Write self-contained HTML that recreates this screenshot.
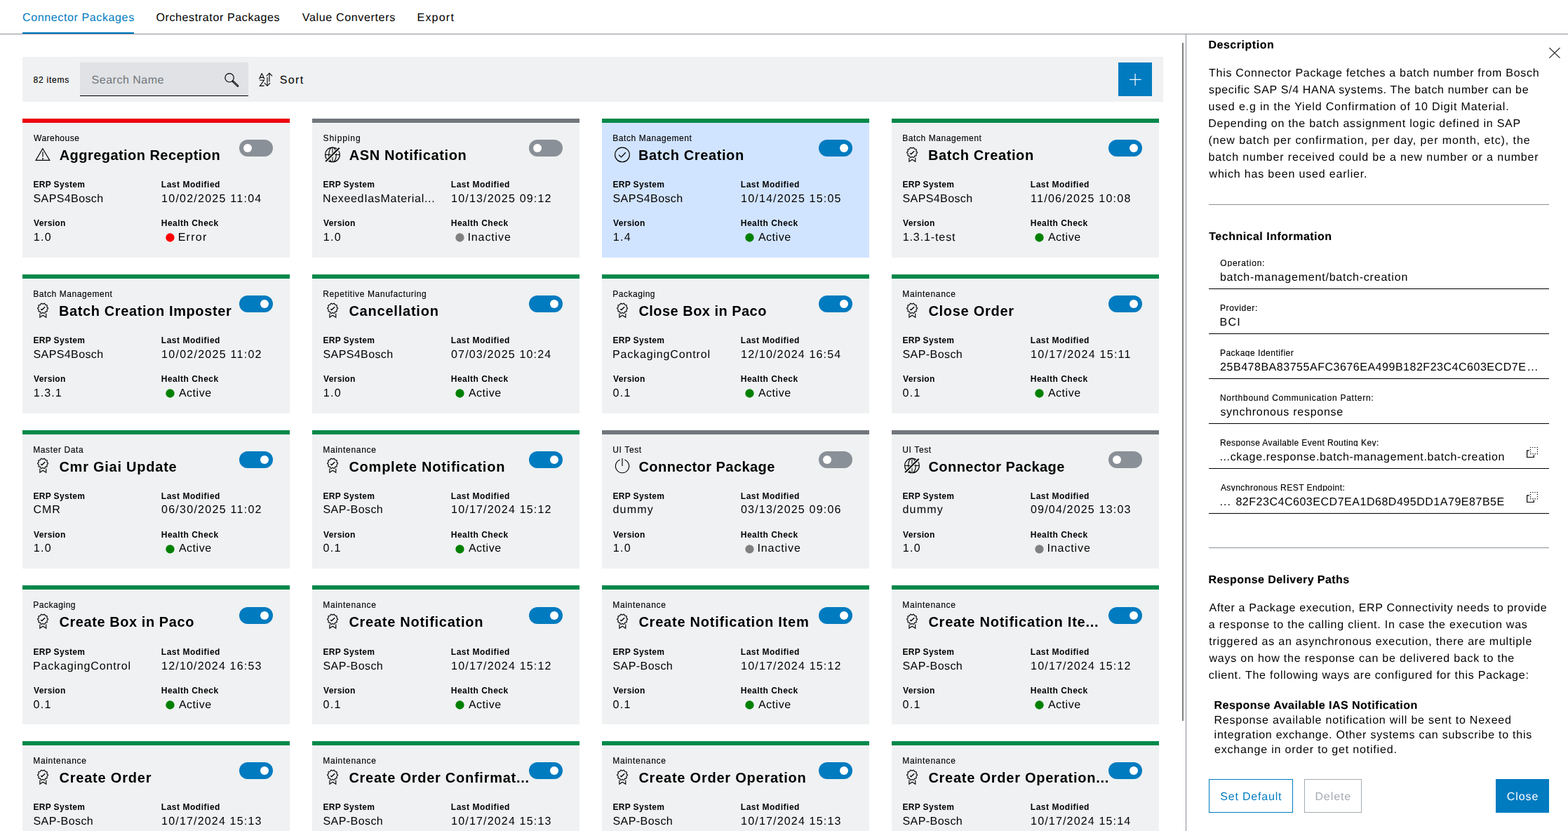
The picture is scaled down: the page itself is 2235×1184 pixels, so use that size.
<!DOCTYPE html>
<html lang="en"><head><meta charset="utf-8"><title>Connector Packages</title><style>
html,body{margin:0;padding:0;background:#fff;}
body{font-family:"Liberation Sans",sans-serif;color:#000;}
#root{position:relative;width:2235px;height:1184px;overflow:hidden;background:#fff;}
.t{position:absolute;white-space:pre;display:block;}
.g{text-rendering:geometricPrecision;}
.r{-webkit-text-stroke:0.15px currentColor;}
.h{-webkit-text-stroke:0.15px currentColor;}
.L{position:absolute;left:0;top:0;width:2235px;height:1184px;will-change:transform;}
.b{position:absolute;}
svg{position:absolute;overflow:visible;}
</style></head><body><div id="root">
<span class="t g" style="left:32.00px;top:18.00px;font-size:16px;line-height:16px;letter-spacing:0.624px;color:#007bc0;">Connector Packages</span>
<span class="t g" style="left:222.40px;top:18.00px;font-size:16px;line-height:16px;letter-spacing:0.630px;">Orchestrator Packages</span>
<span class="t g" style="left:430.80px;top:18.00px;font-size:16px;line-height:16px;letter-spacing:0.660px;">Value Converters</span>
<span class="t g" style="left:594.50px;top:18.00px;font-size:16px;line-height:16px;letter-spacing:1.220px;">Export</span>
<div class="b" style="left:32px;top:46px;width:159px;height:2px;background:#007bc0;"></div>
<div class="b" style="left:0px;top:48px;width:2235px;height:1px;background:#8a9097;"></div>
<div class="b" style="left:32px;top:81px;width:1626px;height:64px;background:#eff1f2;"></div>
<span class="t r" style="left:47.50px;top:108.00px;font-size:12px;line-height:12px;letter-spacing:0.786px;">82 items</span>
<div class="b" style="left:114px;top:89px;width:240px;height:47px;background:#e0e2e5;border-bottom:1px solid #000;"></div>
<span class="t g" style="left:130.60px;top:107.00px;font-size:16px;line-height:16px;letter-spacing:0.510px;color:#71767c;">Search Name</span>
<svg style="left:314px;top:98px" width="32" height="32" viewBox="0 0 32 32" fill="none" stroke="#000" stroke-width="1.2"><circle cx="13.05" cy="12.8" r="6.2"/><path d="M18.1 17.9 L24.9 24.5" stroke-width="2.8" stroke-linecap="round"/><path d="M18.6 18.4 L24.9 24.5" stroke="#e0e2e5" stroke-width="0.7" stroke-linecap="round"/></svg>
<svg style="left:363px;top:97px" width="32" height="32" viewBox="0 0 32 32" fill="none" stroke="#000" stroke-width="1.1"><path d="M6.5 15.7 L10.25 7.4 L13.9 15.7 M7.6 13.4 H12.9" stroke-linejoin="bevel"/><path d="M7.2 17.3 H13.4 L7.3 25.4 H13.6"/><path d="M20.95 19.5 V7.3 M16.8 11.4 L20.95 7.2 L25.1 11.4"/><path d="M18 13 V25 M13.7 21.1 L18 25.3 L22.2 21.1"/></svg>
<span class="t g" style="left:398.80px;top:107.00px;font-size:16px;line-height:16px;letter-spacing:1.333px;">Sort</span>
<div class="b" style="left:1594px;top:89px;width:48px;height:48px;background:#007bc0;"></div>
<svg style="left:1602px;top:97px" width="32" height="32" viewBox="0 0 32 32" fill="none" stroke="#fff" stroke-width="1.2"><path d="M16.1 7.9 V25 M8 16.45 H24.6"/></svg>
<div class="L">
<div class="b" style="left:32px;top:169px;width:381px;height:198px;background:#eff1f2;"></div>
<div class="b" style="left:32px;top:169px;width:381px;height:6px;background:#ed0007;"></div>
<span class="t r" style="left:48.10px;top:191.00px;font-size:12px;line-height:12px;letter-spacing:0.475px;">Warehouse</span>
<svg style="left:48px;top:205px" width="28" height="28" viewBox="0 0 28 28" fill="none" stroke="#000" stroke-width="1.15" stroke-linejoin="round"><path d="M12.9 6.7 L22.8 23.35 H3.0 Z" stroke-width="1.15" stroke-linejoin="miter"/><path d="M13 11.2 V18.5" stroke-width="1.5" stroke="#333"/><rect x="12.1" y="20.3" width="1.8" height="1.8" fill="#000" stroke="none"/></svg>
<span class="t " style="left:84.70px;top:211.00px;font-size:20px;line-height:20px;letter-spacing:0.450px;font-weight:700;">Aggregation Reception</span>
<div class="b" style="left:341px;top:199px;width:48px;height:24px;background:#8a9097;border-radius:12px;"></div>
<div class="b" style="left:347px;top:205px;width:12px;height:12px;background:#fff;border-radius:6px;"></div>
<span class="t " style="left:47.40px;top:257.00px;font-size:12px;line-height:12px;letter-spacing:0.344px;font-weight:700;">ERP System</span>
<span class="t " style="left:229.80px;top:257.00px;font-size:12px;line-height:12px;letter-spacing:0.525px;font-weight:700;">Last Modified</span>
<span class="t g" style="left:47.50px;top:276.00px;font-size:16px;line-height:16px;letter-spacing:0.400px;">SAPS4Bosch</span>
<span class="t g" style="left:230.10px;top:276.00px;font-size:16px;line-height:16px;letter-spacing:1.247px;">10/02/2025 11:04</span>
<span class="t " style="left:48.10px;top:312.00px;font-size:12px;line-height:12px;letter-spacing:0.300px;font-weight:700;">Version</span>
<span class="t " style="left:229.80px;top:312.00px;font-size:12px;line-height:12px;letter-spacing:0.482px;font-weight:700;">Health Check</span>
<span class="t g" style="left:47.70px;top:331.00px;font-size:16px;line-height:16px;letter-spacing:1.350px;">1.0</span>
<svg style="left:232px;top:329px" width="20" height="20" viewBox="0 0 20 20"><circle cx="10.45" cy="9.5" r="6.15" fill="#ff0000"/></svg>
<span class="t g" style="left:253.70px;top:331.00px;font-size:16px;line-height:16px;letter-spacing:1.250px;">Error</span>
<div class="b" style="left:445px;top:169px;width:381px;height:198px;background:#eff1f2;"></div>
<div class="b" style="left:445px;top:169px;width:381px;height:6px;background:#71767c;"></div>
<span class="t r" style="left:460.60px;top:191.00px;font-size:12px;line-height:12px;letter-spacing:0.900px;">Shipping</span>
<svg style="left:461px;top:205px" width="28" height="28" viewBox="0 0 28 28" fill="none" stroke="#000" stroke-width="1.15" stroke-linejoin="round"><circle cx="12.95" cy="15.42" r="10.35" stroke-width="1.15"/><ellipse cx="12.95" cy="15.42" rx="5.3" ry="10.35" stroke-width="1.1"/><path d="M2.6 15.4 H23.3" stroke-width="1.1"/><path d="M12.95 5 V25.8" stroke-width="1.3" stroke="#333"/><path d="M4.1 24.6 L21.7 7.3" stroke="#eff1f2" stroke-width="4.2"/><path d="M3.1 25.1 L22.7 5.8" stroke-width="2"/></svg>
<span class="t " style="left:497.70px;top:211.00px;font-size:20px;line-height:20px;letter-spacing:0.620px;font-weight:700;">ASN Notification</span>
<div class="b" style="left:754px;top:199px;width:48px;height:24px;background:#8a9097;border-radius:12px;"></div>
<div class="b" style="left:760px;top:205px;width:12px;height:12px;background:#fff;border-radius:6px;"></div>
<span class="t " style="left:460.40px;top:257.00px;font-size:12px;line-height:12px;letter-spacing:0.344px;font-weight:700;">ERP System</span>
<span class="t " style="left:642.80px;top:257.00px;font-size:12px;line-height:12px;letter-spacing:0.525px;font-weight:700;">Last Modified</span>
<span class="t g" style="left:459.90px;top:276.00px;font-size:16px;line-height:16px;letter-spacing:0.684px;">NexeedIasMaterial...</span>
<span class="t g" style="left:643.10px;top:276.00px;font-size:16px;line-height:16px;letter-spacing:1.187px;">10/13/2025 09:12</span>
<span class="t " style="left:461.10px;top:312.00px;font-size:12px;line-height:12px;letter-spacing:0.300px;font-weight:700;">Version</span>
<span class="t " style="left:642.80px;top:312.00px;font-size:12px;line-height:12px;letter-spacing:0.482px;font-weight:700;">Health Check</span>
<span class="t g" style="left:460.70px;top:331.00px;font-size:16px;line-height:16px;letter-spacing:1.350px;">1.0</span>
<svg style="left:645px;top:329px" width="20" height="20" viewBox="0 0 20 20"><circle cx="10.45" cy="9.5" r="6.15" fill="#808080"/></svg>
<span class="t g" style="left:666.50px;top:331.00px;font-size:16px;line-height:16px;letter-spacing:0.886px;">Inactive</span>
<div class="b" style="left:858px;top:169px;width:381px;height:198px;background:#d1e4ff;"></div>
<div class="b" style="left:858px;top:169px;width:381px;height:6px;background:#00884a;"></div>
<span class="t r" style="left:873.20px;top:191.00px;font-size:12px;line-height:12px;letter-spacing:0.580px;">Batch Management</span>
<svg style="left:874px;top:205px" width="28" height="28" viewBox="0 0 28 28" fill="none" stroke="#000" stroke-width="1.15" stroke-linejoin="round"><circle cx="12.95" cy="15.42" r="10.35" stroke-width="1.15"/><path d="M8.1 15.6 L11.5 18.9 L17.8 12.2" stroke-width="1.3" stroke-linejoin="miter"/></svg>
<span class="t " style="left:909.90px;top:211.00px;font-size:20px;line-height:20px;letter-spacing:0.615px;font-weight:700;">Batch Creation</span>
<div class="b" style="left:1167px;top:199px;width:48px;height:24px;background:#007bc0;border-radius:12px;"></div>
<div class="b" style="left:1197px;top:205px;width:12px;height:12px;background:#fff;border-radius:6px;"></div>
<span class="t " style="left:873.40px;top:257.00px;font-size:12px;line-height:12px;letter-spacing:0.344px;font-weight:700;">ERP System</span>
<span class="t " style="left:1055.80px;top:257.00px;font-size:12px;line-height:12px;letter-spacing:0.525px;font-weight:700;">Last Modified</span>
<span class="t g" style="left:873.50px;top:276.00px;font-size:16px;line-height:16px;letter-spacing:0.400px;">SAPS4Bosch</span>
<span class="t g" style="left:1056.10px;top:276.00px;font-size:16px;line-height:16px;letter-spacing:1.180px;">10/14/2025 15:05</span>
<span class="t " style="left:874.10px;top:312.00px;font-size:12px;line-height:12px;letter-spacing:0.300px;font-weight:700;">Version</span>
<span class="t " style="left:1055.80px;top:312.00px;font-size:12px;line-height:12px;letter-spacing:0.482px;font-weight:700;">Health Check</span>
<span class="t g" style="left:873.70px;top:331.00px;font-size:16px;line-height:16px;letter-spacing:1.300px;">1.4</span>
<svg style="left:1058px;top:329px" width="20" height="20" viewBox="0 0 20 20"><circle cx="10.45" cy="9.5" r="6.15" fill="#008000"/></svg>
<span class="t g" style="left:1080.90px;top:331.00px;font-size:16px;line-height:16px;letter-spacing:0.520px;">Active</span>
<div class="b" style="left:1271px;top:169px;width:381px;height:198px;background:#eff1f2;"></div>
<div class="b" style="left:1271px;top:169px;width:381px;height:6px;background:#00884a;"></div>
<span class="t r" style="left:1286.20px;top:191.00px;font-size:12px;line-height:12px;letter-spacing:0.580px;">Batch Management</span>
<svg style="left:1287px;top:205px" width="28" height="28" viewBox="0 0 28 28" fill="none" stroke="#000" stroke-width="1.15" stroke-linejoin="round"><path d="M13.07 6.17 L13.40 6.10 L13.74 5.90 L14.13 5.63 L14.54 5.39 L14.96 5.26 L15.35 5.29 L15.68 5.50 L15.94 5.85 L16.13 6.29 L16.29 6.72 L16.45 7.09 L16.67 7.34 L16.98 7.47 L17.38 7.51 L17.84 7.53 L18.32 7.58 L18.73 7.71 L19.03 7.97 L19.18 8.33 L19.18 8.77 L19.08 9.24 L18.95 9.68 L18.87 10.07 L18.90 10.41 L19.07 10.69 L19.37 10.96 L19.74 11.24 L20.09 11.56 L20.35 11.92 L20.44 12.30 L20.35 12.68 L20.09 13.04 L19.74 13.36 L19.37 13.64 L19.07 13.91 L18.90 14.19 L18.87 14.53 L18.95 14.92 L19.08 15.36 L19.18 15.83 L19.18 16.27 L19.03 16.63 L18.73 16.89 L18.32 17.02 L17.84 17.07 L17.38 17.09 L16.98 17.13 L16.67 17.26 L16.45 17.51 L16.29 17.88 L16.13 18.31 L15.94 18.75 L15.68 19.10 L15.35 19.31 L14.96 19.34 L14.54 19.21 L14.13 18.97 L13.74 18.70 L13.40 18.50 L13.07 18.43 L12.74 18.50 L12.40 18.70 L12.01 18.97 L11.60 19.21 L11.18 19.34 L10.79 19.31 L10.46 19.10 L10.20 18.75 L10.01 18.31 L9.85 17.88 L9.69 17.51 L9.47 17.26 L9.16 17.13 L8.76 17.09 L8.30 17.07 L7.82 17.02 L7.41 16.89 L7.11 16.63 L6.96 16.27 L6.96 15.83 L7.06 15.36 L7.19 14.92 L7.27 14.53 L7.24 14.19 L7.07 13.91 L6.77 13.64 L6.40 13.36 L6.05 13.04 L5.79 12.68 L5.70 12.30 L5.79 11.92 L6.05 11.56 L6.40 11.24 L6.77 10.96 L7.07 10.69 L7.24 10.41 L7.27 10.07 L7.19 9.68 L7.06 9.24 L6.96 8.77 L6.96 8.33 L7.11 7.97 L7.41 7.71 L7.82 7.58 L8.30 7.53 L8.76 7.51 L9.16 7.47 L9.47 7.34 L9.69 7.09 L9.85 6.72 L10.01 6.29 L10.20 5.85 L10.46 5.50 L10.79 5.29 L11.18 5.26 L11.60 5.39 L12.01 5.63 L12.40 5.90 L12.74 6.10Z" stroke-width="1.2"/><path d="M10.2 13.15 L11.7 14.5 L16.2 10.15" stroke-width="1.35" stroke-linejoin="miter"/><path d="M8.9 19.6 V25.2 L13.15 22.3 L17.75 25.2 V19.6" stroke-width="1.15" stroke-linejoin="miter"/></svg>
<span class="t " style="left:1322.90px;top:211.00px;font-size:20px;line-height:20px;letter-spacing:0.615px;font-weight:700;">Batch Creation</span>
<div class="b" style="left:1580px;top:199px;width:48px;height:24px;background:#007bc0;border-radius:12px;"></div>
<div class="b" style="left:1610px;top:205px;width:12px;height:12px;background:#fff;border-radius:6px;"></div>
<span class="t " style="left:1286.40px;top:257.00px;font-size:12px;line-height:12px;letter-spacing:0.344px;font-weight:700;">ERP System</span>
<span class="t " style="left:1468.80px;top:257.00px;font-size:12px;line-height:12px;letter-spacing:0.525px;font-weight:700;">Last Modified</span>
<span class="t g" style="left:1286.50px;top:276.00px;font-size:16px;line-height:16px;letter-spacing:0.400px;">SAPS4Bosch</span>
<span class="t g" style="left:1469.10px;top:276.00px;font-size:16px;line-height:16px;letter-spacing:1.260px;">11/06/2025 10:08</span>
<span class="t " style="left:1287.10px;top:312.00px;font-size:12px;line-height:12px;letter-spacing:0.300px;font-weight:700;">Version</span>
<span class="t " style="left:1468.80px;top:312.00px;font-size:12px;line-height:12px;letter-spacing:0.482px;font-weight:700;">Health Check</span>
<span class="t g" style="left:1286.70px;top:331.00px;font-size:16px;line-height:16px;letter-spacing:0.900px;">1.3.1-test</span>
<svg style="left:1471px;top:329px" width="20" height="20" viewBox="0 0 20 20"><circle cx="10.45" cy="9.5" r="6.15" fill="#008000"/></svg>
<span class="t g" style="left:1493.90px;top:331.00px;font-size:16px;line-height:16px;letter-spacing:0.520px;">Active</span>
<div class="b" style="left:32px;top:391px;width:381px;height:198px;background:#eff1f2;"></div>
<div class="b" style="left:32px;top:391px;width:381px;height:6px;background:#00884a;"></div>
<span class="t r" style="left:47.20px;top:413.00px;font-size:12px;line-height:12px;letter-spacing:0.580px;">Batch Management</span>
<svg style="left:48px;top:427px" width="28" height="28" viewBox="0 0 28 28" fill="none" stroke="#000" stroke-width="1.15" stroke-linejoin="round"><path d="M13.07 6.17 L13.40 6.10 L13.74 5.90 L14.13 5.63 L14.54 5.39 L14.96 5.26 L15.35 5.29 L15.68 5.50 L15.94 5.85 L16.13 6.29 L16.29 6.72 L16.45 7.09 L16.67 7.34 L16.98 7.47 L17.38 7.51 L17.84 7.53 L18.32 7.58 L18.73 7.71 L19.03 7.97 L19.18 8.33 L19.18 8.77 L19.08 9.24 L18.95 9.68 L18.87 10.07 L18.90 10.41 L19.07 10.69 L19.37 10.96 L19.74 11.24 L20.09 11.56 L20.35 11.92 L20.44 12.30 L20.35 12.68 L20.09 13.04 L19.74 13.36 L19.37 13.64 L19.07 13.91 L18.90 14.19 L18.87 14.53 L18.95 14.92 L19.08 15.36 L19.18 15.83 L19.18 16.27 L19.03 16.63 L18.73 16.89 L18.32 17.02 L17.84 17.07 L17.38 17.09 L16.98 17.13 L16.67 17.26 L16.45 17.51 L16.29 17.88 L16.13 18.31 L15.94 18.75 L15.68 19.10 L15.35 19.31 L14.96 19.34 L14.54 19.21 L14.13 18.97 L13.74 18.70 L13.40 18.50 L13.07 18.43 L12.74 18.50 L12.40 18.70 L12.01 18.97 L11.60 19.21 L11.18 19.34 L10.79 19.31 L10.46 19.10 L10.20 18.75 L10.01 18.31 L9.85 17.88 L9.69 17.51 L9.47 17.26 L9.16 17.13 L8.76 17.09 L8.30 17.07 L7.82 17.02 L7.41 16.89 L7.11 16.63 L6.96 16.27 L6.96 15.83 L7.06 15.36 L7.19 14.92 L7.27 14.53 L7.24 14.19 L7.07 13.91 L6.77 13.64 L6.40 13.36 L6.05 13.04 L5.79 12.68 L5.70 12.30 L5.79 11.92 L6.05 11.56 L6.40 11.24 L6.77 10.96 L7.07 10.69 L7.24 10.41 L7.27 10.07 L7.19 9.68 L7.06 9.24 L6.96 8.77 L6.96 8.33 L7.11 7.97 L7.41 7.71 L7.82 7.58 L8.30 7.53 L8.76 7.51 L9.16 7.47 L9.47 7.34 L9.69 7.09 L9.85 6.72 L10.01 6.29 L10.20 5.85 L10.46 5.50 L10.79 5.29 L11.18 5.26 L11.60 5.39 L12.01 5.63 L12.40 5.90 L12.74 6.10Z" stroke-width="1.2"/><path d="M10.2 13.15 L11.7 14.5 L16.2 10.15" stroke-width="1.35" stroke-linejoin="miter"/><path d="M8.9 19.6 V25.2 L13.15 22.3 L17.75 25.2 V19.6" stroke-width="1.15" stroke-linejoin="miter"/></svg>
<span class="t " style="left:83.90px;top:433.00px;font-size:20px;line-height:20px;letter-spacing:0.618px;font-weight:700;">Batch Creation Imposter</span>
<div class="b" style="left:341px;top:421px;width:48px;height:24px;background:#007bc0;border-radius:12px;"></div>
<div class="b" style="left:371px;top:427px;width:12px;height:12px;background:#fff;border-radius:6px;"></div>
<span class="t " style="left:47.40px;top:479.00px;font-size:12px;line-height:12px;letter-spacing:0.344px;font-weight:700;">ERP System</span>
<span class="t " style="left:229.80px;top:479.00px;font-size:12px;line-height:12px;letter-spacing:0.525px;font-weight:700;">Last Modified</span>
<span class="t g" style="left:47.50px;top:498.00px;font-size:16px;line-height:16px;letter-spacing:0.400px;">SAPS4Bosch</span>
<span class="t g" style="left:230.10px;top:498.00px;font-size:16px;line-height:16px;letter-spacing:1.267px;">10/02/2025 11:02</span>
<span class="t " style="left:48.10px;top:534.00px;font-size:12px;line-height:12px;letter-spacing:0.300px;font-weight:700;">Version</span>
<span class="t " style="left:229.80px;top:534.00px;font-size:12px;line-height:12px;letter-spacing:0.482px;font-weight:700;">Health Check</span>
<span class="t g" style="left:47.70px;top:553.00px;font-size:16px;line-height:16px;letter-spacing:1.100px;">1.3.1</span>
<svg style="left:232px;top:551px" width="20" height="20" viewBox="0 0 20 20"><circle cx="10.45" cy="9.5" r="6.15" fill="#008000"/></svg>
<span class="t g" style="left:254.90px;top:553.00px;font-size:16px;line-height:16px;letter-spacing:0.520px;">Active</span>
<div class="b" style="left:445px;top:391px;width:381px;height:198px;background:#eff1f2;"></div>
<div class="b" style="left:445px;top:391px;width:381px;height:6px;background:#00884a;"></div>
<span class="t r" style="left:460.20px;top:413.00px;font-size:12px;line-height:12px;letter-spacing:0.643px;">Repetitive Manufacturing</span>
<svg style="left:461px;top:427px" width="28" height="28" viewBox="0 0 28 28" fill="none" stroke="#000" stroke-width="1.15" stroke-linejoin="round"><path d="M13.07 6.17 L13.40 6.10 L13.74 5.90 L14.13 5.63 L14.54 5.39 L14.96 5.26 L15.35 5.29 L15.68 5.50 L15.94 5.85 L16.13 6.29 L16.29 6.72 L16.45 7.09 L16.67 7.34 L16.98 7.47 L17.38 7.51 L17.84 7.53 L18.32 7.58 L18.73 7.71 L19.03 7.97 L19.18 8.33 L19.18 8.77 L19.08 9.24 L18.95 9.68 L18.87 10.07 L18.90 10.41 L19.07 10.69 L19.37 10.96 L19.74 11.24 L20.09 11.56 L20.35 11.92 L20.44 12.30 L20.35 12.68 L20.09 13.04 L19.74 13.36 L19.37 13.64 L19.07 13.91 L18.90 14.19 L18.87 14.53 L18.95 14.92 L19.08 15.36 L19.18 15.83 L19.18 16.27 L19.03 16.63 L18.73 16.89 L18.32 17.02 L17.84 17.07 L17.38 17.09 L16.98 17.13 L16.67 17.26 L16.45 17.51 L16.29 17.88 L16.13 18.31 L15.94 18.75 L15.68 19.10 L15.35 19.31 L14.96 19.34 L14.54 19.21 L14.13 18.97 L13.74 18.70 L13.40 18.50 L13.07 18.43 L12.74 18.50 L12.40 18.70 L12.01 18.97 L11.60 19.21 L11.18 19.34 L10.79 19.31 L10.46 19.10 L10.20 18.75 L10.01 18.31 L9.85 17.88 L9.69 17.51 L9.47 17.26 L9.16 17.13 L8.76 17.09 L8.30 17.07 L7.82 17.02 L7.41 16.89 L7.11 16.63 L6.96 16.27 L6.96 15.83 L7.06 15.36 L7.19 14.92 L7.27 14.53 L7.24 14.19 L7.07 13.91 L6.77 13.64 L6.40 13.36 L6.05 13.04 L5.79 12.68 L5.70 12.30 L5.79 11.92 L6.05 11.56 L6.40 11.24 L6.77 10.96 L7.07 10.69 L7.24 10.41 L7.27 10.07 L7.19 9.68 L7.06 9.24 L6.96 8.77 L6.96 8.33 L7.11 7.97 L7.41 7.71 L7.82 7.58 L8.30 7.53 L8.76 7.51 L9.16 7.47 L9.47 7.34 L9.69 7.09 L9.85 6.72 L10.01 6.29 L10.20 5.85 L10.46 5.50 L10.79 5.29 L11.18 5.26 L11.60 5.39 L12.01 5.63 L12.40 5.90 L12.74 6.10Z" stroke-width="1.2"/><path d="M10.2 13.15 L11.7 14.5 L16.2 10.15" stroke-width="1.35" stroke-linejoin="miter"/><path d="M8.9 19.6 V25.2 L13.15 22.3 L17.75 25.2 V19.6" stroke-width="1.15" stroke-linejoin="miter"/></svg>
<span class="t " style="left:497.40px;top:433.00px;font-size:20px;line-height:20px;letter-spacing:0.782px;font-weight:700;">Cancellation</span>
<div class="b" style="left:754px;top:421px;width:48px;height:24px;background:#007bc0;border-radius:12px;"></div>
<div class="b" style="left:784px;top:427px;width:12px;height:12px;background:#fff;border-radius:6px;"></div>
<span class="t " style="left:460.40px;top:479.00px;font-size:12px;line-height:12px;letter-spacing:0.344px;font-weight:700;">ERP System</span>
<span class="t " style="left:642.80px;top:479.00px;font-size:12px;line-height:12px;letter-spacing:0.525px;font-weight:700;">Last Modified</span>
<span class="t g" style="left:460.50px;top:498.00px;font-size:16px;line-height:16px;letter-spacing:0.400px;">SAPS4Bosch</span>
<span class="t g" style="left:643.00px;top:498.00px;font-size:16px;line-height:16px;letter-spacing:1.173px;">07/03/2025 10:24</span>
<span class="t " style="left:461.10px;top:534.00px;font-size:12px;line-height:12px;letter-spacing:0.300px;font-weight:700;">Version</span>
<span class="t " style="left:642.80px;top:534.00px;font-size:12px;line-height:12px;letter-spacing:0.482px;font-weight:700;">Health Check</span>
<span class="t g" style="left:460.70px;top:553.00px;font-size:16px;line-height:16px;letter-spacing:1.350px;">1.0</span>
<svg style="left:645px;top:551px" width="20" height="20" viewBox="0 0 20 20"><circle cx="10.45" cy="9.5" r="6.15" fill="#008000"/></svg>
<span class="t g" style="left:667.90px;top:553.00px;font-size:16px;line-height:16px;letter-spacing:0.520px;">Active</span>
<div class="b" style="left:858px;top:391px;width:381px;height:198px;background:#eff1f2;"></div>
<div class="b" style="left:858px;top:391px;width:381px;height:6px;background:#00884a;"></div>
<span class="t r" style="left:873.20px;top:413.00px;font-size:12px;line-height:12px;letter-spacing:0.538px;">Packaging</span>
<svg style="left:874px;top:427px" width="28" height="28" viewBox="0 0 28 28" fill="none" stroke="#000" stroke-width="1.15" stroke-linejoin="round"><path d="M13.07 6.17 L13.40 6.10 L13.74 5.90 L14.13 5.63 L14.54 5.39 L14.96 5.26 L15.35 5.29 L15.68 5.50 L15.94 5.85 L16.13 6.29 L16.29 6.72 L16.45 7.09 L16.67 7.34 L16.98 7.47 L17.38 7.51 L17.84 7.53 L18.32 7.58 L18.73 7.71 L19.03 7.97 L19.18 8.33 L19.18 8.77 L19.08 9.24 L18.95 9.68 L18.87 10.07 L18.90 10.41 L19.07 10.69 L19.37 10.96 L19.74 11.24 L20.09 11.56 L20.35 11.92 L20.44 12.30 L20.35 12.68 L20.09 13.04 L19.74 13.36 L19.37 13.64 L19.07 13.91 L18.90 14.19 L18.87 14.53 L18.95 14.92 L19.08 15.36 L19.18 15.83 L19.18 16.27 L19.03 16.63 L18.73 16.89 L18.32 17.02 L17.84 17.07 L17.38 17.09 L16.98 17.13 L16.67 17.26 L16.45 17.51 L16.29 17.88 L16.13 18.31 L15.94 18.75 L15.68 19.10 L15.35 19.31 L14.96 19.34 L14.54 19.21 L14.13 18.97 L13.74 18.70 L13.40 18.50 L13.07 18.43 L12.74 18.50 L12.40 18.70 L12.01 18.97 L11.60 19.21 L11.18 19.34 L10.79 19.31 L10.46 19.10 L10.20 18.75 L10.01 18.31 L9.85 17.88 L9.69 17.51 L9.47 17.26 L9.16 17.13 L8.76 17.09 L8.30 17.07 L7.82 17.02 L7.41 16.89 L7.11 16.63 L6.96 16.27 L6.96 15.83 L7.06 15.36 L7.19 14.92 L7.27 14.53 L7.24 14.19 L7.07 13.91 L6.77 13.64 L6.40 13.36 L6.05 13.04 L5.79 12.68 L5.70 12.30 L5.79 11.92 L6.05 11.56 L6.40 11.24 L6.77 10.96 L7.07 10.69 L7.24 10.41 L7.27 10.07 L7.19 9.68 L7.06 9.24 L6.96 8.77 L6.96 8.33 L7.11 7.97 L7.41 7.71 L7.82 7.58 L8.30 7.53 L8.76 7.51 L9.16 7.47 L9.47 7.34 L9.69 7.09 L9.85 6.72 L10.01 6.29 L10.20 5.85 L10.46 5.50 L10.79 5.29 L11.18 5.26 L11.60 5.39 L12.01 5.63 L12.40 5.90 L12.74 6.10Z" stroke-width="1.2"/><path d="M10.2 13.15 L11.7 14.5 L16.2 10.15" stroke-width="1.35" stroke-linejoin="miter"/><path d="M8.9 19.6 V25.2 L13.15 22.3 L17.75 25.2 V19.6" stroke-width="1.15" stroke-linejoin="miter"/></svg>
<span class="t " style="left:910.40px;top:433.00px;font-size:20px;line-height:20px;letter-spacing:0.469px;font-weight:700;">Close Box in Paco</span>
<div class="b" style="left:1167px;top:421px;width:48px;height:24px;background:#007bc0;border-radius:12px;"></div>
<div class="b" style="left:1197px;top:427px;width:12px;height:12px;background:#fff;border-radius:6px;"></div>
<span class="t " style="left:873.40px;top:479.00px;font-size:12px;line-height:12px;letter-spacing:0.344px;font-weight:700;">ERP System</span>
<span class="t " style="left:1055.80px;top:479.00px;font-size:12px;line-height:12px;letter-spacing:0.525px;font-weight:700;">Last Modified</span>
<span class="t g" style="left:872.90px;top:498.00px;font-size:16px;line-height:16px;letter-spacing:0.860px;">PackagingControl</span>
<span class="t g" style="left:1056.10px;top:498.00px;font-size:16px;line-height:16px;letter-spacing:1.167px;">12/10/2024 16:54</span>
<span class="t " style="left:874.10px;top:534.00px;font-size:12px;line-height:12px;letter-spacing:0.300px;font-weight:700;">Version</span>
<span class="t " style="left:1055.80px;top:534.00px;font-size:12px;line-height:12px;letter-spacing:0.482px;font-weight:700;">Health Check</span>
<span class="t g" style="left:873.60px;top:553.00px;font-size:16px;line-height:16px;letter-spacing:1.250px;">0.1</span>
<svg style="left:1058px;top:551px" width="20" height="20" viewBox="0 0 20 20"><circle cx="10.45" cy="9.5" r="6.15" fill="#008000"/></svg>
<span class="t g" style="left:1080.90px;top:553.00px;font-size:16px;line-height:16px;letter-spacing:0.520px;">Active</span>
<div class="b" style="left:1271px;top:391px;width:381px;height:198px;background:#eff1f2;"></div>
<div class="b" style="left:1271px;top:391px;width:381px;height:6px;background:#00884a;"></div>
<span class="t r" style="left:1286.20px;top:413.00px;font-size:12px;line-height:12px;letter-spacing:0.700px;">Maintenance</span>
<svg style="left:1287px;top:427px" width="28" height="28" viewBox="0 0 28 28" fill="none" stroke="#000" stroke-width="1.15" stroke-linejoin="round"><path d="M13.07 6.17 L13.40 6.10 L13.74 5.90 L14.13 5.63 L14.54 5.39 L14.96 5.26 L15.35 5.29 L15.68 5.50 L15.94 5.85 L16.13 6.29 L16.29 6.72 L16.45 7.09 L16.67 7.34 L16.98 7.47 L17.38 7.51 L17.84 7.53 L18.32 7.58 L18.73 7.71 L19.03 7.97 L19.18 8.33 L19.18 8.77 L19.08 9.24 L18.95 9.68 L18.87 10.07 L18.90 10.41 L19.07 10.69 L19.37 10.96 L19.74 11.24 L20.09 11.56 L20.35 11.92 L20.44 12.30 L20.35 12.68 L20.09 13.04 L19.74 13.36 L19.37 13.64 L19.07 13.91 L18.90 14.19 L18.87 14.53 L18.95 14.92 L19.08 15.36 L19.18 15.83 L19.18 16.27 L19.03 16.63 L18.73 16.89 L18.32 17.02 L17.84 17.07 L17.38 17.09 L16.98 17.13 L16.67 17.26 L16.45 17.51 L16.29 17.88 L16.13 18.31 L15.94 18.75 L15.68 19.10 L15.35 19.31 L14.96 19.34 L14.54 19.21 L14.13 18.97 L13.74 18.70 L13.40 18.50 L13.07 18.43 L12.74 18.50 L12.40 18.70 L12.01 18.97 L11.60 19.21 L11.18 19.34 L10.79 19.31 L10.46 19.10 L10.20 18.75 L10.01 18.31 L9.85 17.88 L9.69 17.51 L9.47 17.26 L9.16 17.13 L8.76 17.09 L8.30 17.07 L7.82 17.02 L7.41 16.89 L7.11 16.63 L6.96 16.27 L6.96 15.83 L7.06 15.36 L7.19 14.92 L7.27 14.53 L7.24 14.19 L7.07 13.91 L6.77 13.64 L6.40 13.36 L6.05 13.04 L5.79 12.68 L5.70 12.30 L5.79 11.92 L6.05 11.56 L6.40 11.24 L6.77 10.96 L7.07 10.69 L7.24 10.41 L7.27 10.07 L7.19 9.68 L7.06 9.24 L6.96 8.77 L6.96 8.33 L7.11 7.97 L7.41 7.71 L7.82 7.58 L8.30 7.53 L8.76 7.51 L9.16 7.47 L9.47 7.34 L9.69 7.09 L9.85 6.72 L10.01 6.29 L10.20 5.85 L10.46 5.50 L10.79 5.29 L11.18 5.26 L11.60 5.39 L12.01 5.63 L12.40 5.90 L12.74 6.10Z" stroke-width="1.2"/><path d="M10.2 13.15 L11.7 14.5 L16.2 10.15" stroke-width="1.35" stroke-linejoin="miter"/><path d="M8.9 19.6 V25.2 L13.15 22.3 L17.75 25.2 V19.6" stroke-width="1.15" stroke-linejoin="miter"/></svg>
<span class="t " style="left:1323.40px;top:433.00px;font-size:20px;line-height:20px;letter-spacing:0.720px;font-weight:700;">Close Order</span>
<div class="b" style="left:1580px;top:421px;width:48px;height:24px;background:#007bc0;border-radius:12px;"></div>
<div class="b" style="left:1610px;top:427px;width:12px;height:12px;background:#fff;border-radius:6px;"></div>
<span class="t " style="left:1286.40px;top:479.00px;font-size:12px;line-height:12px;letter-spacing:0.344px;font-weight:700;">ERP System</span>
<span class="t " style="left:1468.80px;top:479.00px;font-size:12px;line-height:12px;letter-spacing:0.525px;font-weight:700;">Last Modified</span>
<span class="t g" style="left:1286.50px;top:498.00px;font-size:16px;line-height:16px;letter-spacing:0.425px;">SAP-Bosch</span>
<span class="t g" style="left:1469.10px;top:498.00px;font-size:16px;line-height:16px;letter-spacing:1.267px;">10/17/2024 15:11</span>
<span class="t " style="left:1287.10px;top:534.00px;font-size:12px;line-height:12px;letter-spacing:0.300px;font-weight:700;">Version</span>
<span class="t " style="left:1468.80px;top:534.00px;font-size:12px;line-height:12px;letter-spacing:0.482px;font-weight:700;">Health Check</span>
<span class="t g" style="left:1286.60px;top:553.00px;font-size:16px;line-height:16px;letter-spacing:1.250px;">0.1</span>
<svg style="left:1471px;top:551px" width="20" height="20" viewBox="0 0 20 20"><circle cx="10.45" cy="9.5" r="6.15" fill="#008000"/></svg>
<span class="t g" style="left:1493.90px;top:553.00px;font-size:16px;line-height:16px;letter-spacing:0.520px;">Active</span>
<div class="b" style="left:32px;top:613px;width:381px;height:197px;background:#eff1f2;"></div>
<div class="b" style="left:32px;top:613px;width:381px;height:6px;background:#00884a;"></div>
<span class="t r" style="left:47.20px;top:635.00px;font-size:12px;line-height:12px;letter-spacing:0.620px;">Master Data</span>
<svg style="left:48px;top:648px" width="28" height="28" viewBox="0 0 28 28" fill="none" stroke="#000" stroke-width="1.15" stroke-linejoin="round"><path d="M13.07 6.17 L13.40 6.10 L13.74 5.90 L14.13 5.63 L14.54 5.39 L14.96 5.26 L15.35 5.29 L15.68 5.50 L15.94 5.85 L16.13 6.29 L16.29 6.72 L16.45 7.09 L16.67 7.34 L16.98 7.47 L17.38 7.51 L17.84 7.53 L18.32 7.58 L18.73 7.71 L19.03 7.97 L19.18 8.33 L19.18 8.77 L19.08 9.24 L18.95 9.68 L18.87 10.07 L18.90 10.41 L19.07 10.69 L19.37 10.96 L19.74 11.24 L20.09 11.56 L20.35 11.92 L20.44 12.30 L20.35 12.68 L20.09 13.04 L19.74 13.36 L19.37 13.64 L19.07 13.91 L18.90 14.19 L18.87 14.53 L18.95 14.92 L19.08 15.36 L19.18 15.83 L19.18 16.27 L19.03 16.63 L18.73 16.89 L18.32 17.02 L17.84 17.07 L17.38 17.09 L16.98 17.13 L16.67 17.26 L16.45 17.51 L16.29 17.88 L16.13 18.31 L15.94 18.75 L15.68 19.10 L15.35 19.31 L14.96 19.34 L14.54 19.21 L14.13 18.97 L13.74 18.70 L13.40 18.50 L13.07 18.43 L12.74 18.50 L12.40 18.70 L12.01 18.97 L11.60 19.21 L11.18 19.34 L10.79 19.31 L10.46 19.10 L10.20 18.75 L10.01 18.31 L9.85 17.88 L9.69 17.51 L9.47 17.26 L9.16 17.13 L8.76 17.09 L8.30 17.07 L7.82 17.02 L7.41 16.89 L7.11 16.63 L6.96 16.27 L6.96 15.83 L7.06 15.36 L7.19 14.92 L7.27 14.53 L7.24 14.19 L7.07 13.91 L6.77 13.64 L6.40 13.36 L6.05 13.04 L5.79 12.68 L5.70 12.30 L5.79 11.92 L6.05 11.56 L6.40 11.24 L6.77 10.96 L7.07 10.69 L7.24 10.41 L7.27 10.07 L7.19 9.68 L7.06 9.24 L6.96 8.77 L6.96 8.33 L7.11 7.97 L7.41 7.71 L7.82 7.58 L8.30 7.53 L8.76 7.51 L9.16 7.47 L9.47 7.34 L9.69 7.09 L9.85 6.72 L10.01 6.29 L10.20 5.85 L10.46 5.50 L10.79 5.29 L11.18 5.26 L11.60 5.39 L12.01 5.63 L12.40 5.90 L12.74 6.10Z" stroke-width="1.2"/><path d="M10.2 13.15 L11.7 14.5 L16.2 10.15" stroke-width="1.35" stroke-linejoin="miter"/><path d="M8.9 19.6 V25.2 L13.15 22.3 L17.75 25.2 V19.6" stroke-width="1.15" stroke-linejoin="miter"/></svg>
<span class="t " style="left:84.40px;top:655.00px;font-size:20px;line-height:20px;letter-spacing:0.757px;font-weight:700;">Cmr Giai Update</span>
<div class="b" style="left:341px;top:643px;width:48px;height:24px;background:#007bc0;border-radius:12px;"></div>
<div class="b" style="left:371px;top:649px;width:12px;height:12px;background:#fff;border-radius:6px;"></div>
<span class="t " style="left:47.40px;top:701.00px;font-size:12px;line-height:12px;letter-spacing:0.344px;font-weight:700;">ERP System</span>
<span class="t " style="left:229.80px;top:701.00px;font-size:12px;line-height:12px;letter-spacing:0.525px;font-weight:700;">Last Modified</span>
<span class="t g" style="left:47.40px;top:719.00px;font-size:16px;line-height:16px;letter-spacing:1.050px;">CMR</span>
<span class="t g" style="left:230.00px;top:719.00px;font-size:16px;line-height:16px;letter-spacing:1.273px;">06/30/2025 11:02</span>
<span class="t " style="left:48.10px;top:756.00px;font-size:12px;line-height:12px;letter-spacing:0.300px;font-weight:700;">Version</span>
<span class="t " style="left:229.80px;top:756.00px;font-size:12px;line-height:12px;letter-spacing:0.482px;font-weight:700;">Health Check</span>
<span class="t g" style="left:47.70px;top:774.00px;font-size:16px;line-height:16px;letter-spacing:1.350px;">1.0</span>
<svg style="left:232px;top:773px" width="20" height="20" viewBox="0 0 20 20"><circle cx="10.45" cy="9.3" r="6.15" fill="#008000"/></svg>
<span class="t g" style="left:254.90px;top:774.00px;font-size:16px;line-height:16px;letter-spacing:0.520px;">Active</span>
<div class="b" style="left:445px;top:613px;width:381px;height:197px;background:#eff1f2;"></div>
<div class="b" style="left:445px;top:613px;width:381px;height:6px;background:#00884a;"></div>
<span class="t r" style="left:460.20px;top:635.00px;font-size:12px;line-height:12px;letter-spacing:0.700px;">Maintenance</span>
<svg style="left:461px;top:648px" width="28" height="28" viewBox="0 0 28 28" fill="none" stroke="#000" stroke-width="1.15" stroke-linejoin="round"><path d="M13.07 6.17 L13.40 6.10 L13.74 5.90 L14.13 5.63 L14.54 5.39 L14.96 5.26 L15.35 5.29 L15.68 5.50 L15.94 5.85 L16.13 6.29 L16.29 6.72 L16.45 7.09 L16.67 7.34 L16.98 7.47 L17.38 7.51 L17.84 7.53 L18.32 7.58 L18.73 7.71 L19.03 7.97 L19.18 8.33 L19.18 8.77 L19.08 9.24 L18.95 9.68 L18.87 10.07 L18.90 10.41 L19.07 10.69 L19.37 10.96 L19.74 11.24 L20.09 11.56 L20.35 11.92 L20.44 12.30 L20.35 12.68 L20.09 13.04 L19.74 13.36 L19.37 13.64 L19.07 13.91 L18.90 14.19 L18.87 14.53 L18.95 14.92 L19.08 15.36 L19.18 15.83 L19.18 16.27 L19.03 16.63 L18.73 16.89 L18.32 17.02 L17.84 17.07 L17.38 17.09 L16.98 17.13 L16.67 17.26 L16.45 17.51 L16.29 17.88 L16.13 18.31 L15.94 18.75 L15.68 19.10 L15.35 19.31 L14.96 19.34 L14.54 19.21 L14.13 18.97 L13.74 18.70 L13.40 18.50 L13.07 18.43 L12.74 18.50 L12.40 18.70 L12.01 18.97 L11.60 19.21 L11.18 19.34 L10.79 19.31 L10.46 19.10 L10.20 18.75 L10.01 18.31 L9.85 17.88 L9.69 17.51 L9.47 17.26 L9.16 17.13 L8.76 17.09 L8.30 17.07 L7.82 17.02 L7.41 16.89 L7.11 16.63 L6.96 16.27 L6.96 15.83 L7.06 15.36 L7.19 14.92 L7.27 14.53 L7.24 14.19 L7.07 13.91 L6.77 13.64 L6.40 13.36 L6.05 13.04 L5.79 12.68 L5.70 12.30 L5.79 11.92 L6.05 11.56 L6.40 11.24 L6.77 10.96 L7.07 10.69 L7.24 10.41 L7.27 10.07 L7.19 9.68 L7.06 9.24 L6.96 8.77 L6.96 8.33 L7.11 7.97 L7.41 7.71 L7.82 7.58 L8.30 7.53 L8.76 7.51 L9.16 7.47 L9.47 7.34 L9.69 7.09 L9.85 6.72 L10.01 6.29 L10.20 5.85 L10.46 5.50 L10.79 5.29 L11.18 5.26 L11.60 5.39 L12.01 5.63 L12.40 5.90 L12.74 6.10Z" stroke-width="1.2"/><path d="M10.2 13.15 L11.7 14.5 L16.2 10.15" stroke-width="1.35" stroke-linejoin="miter"/><path d="M8.9 19.6 V25.2 L13.15 22.3 L17.75 25.2 V19.6" stroke-width="1.15" stroke-linejoin="miter"/></svg>
<span class="t " style="left:497.40px;top:655.00px;font-size:20px;line-height:20px;letter-spacing:0.765px;font-weight:700;">Complete Notification</span>
<div class="b" style="left:754px;top:643px;width:48px;height:24px;background:#007bc0;border-radius:12px;"></div>
<div class="b" style="left:784px;top:649px;width:12px;height:12px;background:#fff;border-radius:6px;"></div>
<span class="t " style="left:460.40px;top:701.00px;font-size:12px;line-height:12px;letter-spacing:0.344px;font-weight:700;">ERP System</span>
<span class="t " style="left:642.80px;top:701.00px;font-size:12px;line-height:12px;letter-spacing:0.525px;font-weight:700;">Last Modified</span>
<span class="t g" style="left:460.50px;top:719.00px;font-size:16px;line-height:16px;letter-spacing:0.425px;">SAP-Bosch</span>
<span class="t g" style="left:643.10px;top:719.00px;font-size:16px;line-height:16px;letter-spacing:1.187px;">10/17/2024 15:12</span>
<span class="t " style="left:461.10px;top:756.00px;font-size:12px;line-height:12px;letter-spacing:0.300px;font-weight:700;">Version</span>
<span class="t " style="left:642.80px;top:756.00px;font-size:12px;line-height:12px;letter-spacing:0.482px;font-weight:700;">Health Check</span>
<span class="t g" style="left:460.60px;top:774.00px;font-size:16px;line-height:16px;letter-spacing:1.250px;">0.1</span>
<svg style="left:645px;top:773px" width="20" height="20" viewBox="0 0 20 20"><circle cx="10.45" cy="9.3" r="6.15" fill="#008000"/></svg>
<span class="t g" style="left:667.90px;top:774.00px;font-size:16px;line-height:16px;letter-spacing:0.520px;">Active</span>
<div class="b" style="left:858px;top:613px;width:381px;height:197px;background:#eff1f2;"></div>
<div class="b" style="left:858px;top:613px;width:381px;height:6px;background:#71767c;"></div>
<span class="t r" style="left:873.30px;top:635.00px;font-size:12px;line-height:12px;letter-spacing:0.617px;">UI Test</span>
<svg style="left:874px;top:648px" width="28" height="28" viewBox="0 0 28 28" fill="none" stroke="#000" stroke-width="1.15" stroke-linejoin="round"><path d="M16.67 7.28 A9.6 9.6 0 1 1 9.33 7.28" stroke-width="1.15" stroke-linecap="round"/><path d="M12.97 5.0 V15.9" stroke-width="1.6" stroke="#444"/></svg>
<span class="t " style="left:910.40px;top:655.00px;font-size:20px;line-height:20px;letter-spacing:0.456px;font-weight:700;">Connector Package</span>
<div class="b" style="left:1167px;top:643px;width:48px;height:24px;background:#8a9097;border-radius:12px;"></div>
<div class="b" style="left:1173px;top:649px;width:12px;height:12px;background:#fff;border-radius:6px;"></div>
<span class="t " style="left:873.40px;top:701.00px;font-size:12px;line-height:12px;letter-spacing:0.344px;font-weight:700;">ERP System</span>
<span class="t " style="left:1055.80px;top:701.00px;font-size:12px;line-height:12px;letter-spacing:0.525px;font-weight:700;">Last Modified</span>
<span class="t g" style="left:873.50px;top:719.00px;font-size:16px;line-height:16px;letter-spacing:1.175px;">dummy</span>
<span class="t g" style="left:1056.00px;top:719.00px;font-size:16px;line-height:16px;letter-spacing:1.187px;">03/13/2025 09:06</span>
<span class="t " style="left:874.10px;top:756.00px;font-size:12px;line-height:12px;letter-spacing:0.300px;font-weight:700;">Version</span>
<span class="t " style="left:1055.80px;top:756.00px;font-size:12px;line-height:12px;letter-spacing:0.482px;font-weight:700;">Health Check</span>
<span class="t g" style="left:873.70px;top:774.00px;font-size:16px;line-height:16px;letter-spacing:1.350px;">1.0</span>
<svg style="left:1058px;top:773px" width="20" height="20" viewBox="0 0 20 20"><circle cx="10.45" cy="9.3" r="6.15" fill="#808080"/></svg>
<span class="t g" style="left:1079.50px;top:774.00px;font-size:16px;line-height:16px;letter-spacing:0.886px;">Inactive</span>
<div class="b" style="left:1271px;top:613px;width:381px;height:197px;background:#eff1f2;"></div>
<div class="b" style="left:1271px;top:613px;width:381px;height:6px;background:#71767c;"></div>
<span class="t r" style="left:1286.30px;top:635.00px;font-size:12px;line-height:12px;letter-spacing:0.617px;">UI Test</span>
<svg style="left:1287px;top:648px" width="28" height="28" viewBox="0 0 28 28" fill="none" stroke="#000" stroke-width="1.15" stroke-linejoin="round"><circle cx="12.95" cy="15.42" r="10.35" stroke-width="1.15"/><ellipse cx="12.95" cy="15.42" rx="5.3" ry="10.35" stroke-width="1.1"/><path d="M2.6 15.4 H23.3" stroke-width="1.1"/><path d="M12.95 5 V25.8" stroke-width="1.3" stroke="#333"/><path d="M4.1 24.6 L21.7 7.3" stroke="#eff1f2" stroke-width="4.2"/><path d="M3.1 25.1 L22.7 5.8" stroke-width="2"/></svg>
<span class="t " style="left:1323.40px;top:655.00px;font-size:20px;line-height:20px;letter-spacing:0.456px;font-weight:700;">Connector Package</span>
<div class="b" style="left:1580px;top:643px;width:48px;height:24px;background:#8a9097;border-radius:12px;"></div>
<div class="b" style="left:1586px;top:649px;width:12px;height:12px;background:#fff;border-radius:6px;"></div>
<span class="t " style="left:1286.40px;top:701.00px;font-size:12px;line-height:12px;letter-spacing:0.344px;font-weight:700;">ERP System</span>
<span class="t " style="left:1468.80px;top:701.00px;font-size:12px;line-height:12px;letter-spacing:0.525px;font-weight:700;">Last Modified</span>
<span class="t g" style="left:1286.50px;top:719.00px;font-size:16px;line-height:16px;letter-spacing:1.175px;">dummy</span>
<span class="t g" style="left:1469.00px;top:719.00px;font-size:16px;line-height:16px;letter-spacing:1.187px;">09/04/2025 13:03</span>
<span class="t " style="left:1287.10px;top:756.00px;font-size:12px;line-height:12px;letter-spacing:0.300px;font-weight:700;">Version</span>
<span class="t " style="left:1468.80px;top:756.00px;font-size:12px;line-height:12px;letter-spacing:0.482px;font-weight:700;">Health Check</span>
<span class="t g" style="left:1286.70px;top:774.00px;font-size:16px;line-height:16px;letter-spacing:1.350px;">1.0</span>
<svg style="left:1471px;top:773px" width="20" height="20" viewBox="0 0 20 20"><circle cx="10.45" cy="9.3" r="6.15" fill="#808080"/></svg>
<span class="t g" style="left:1492.50px;top:774.00px;font-size:16px;line-height:16px;letter-spacing:0.886px;">Inactive</span>
<div class="b" style="left:32px;top:834px;width:381px;height:198px;background:#eff1f2;"></div>
<div class="b" style="left:32px;top:834px;width:381px;height:6px;background:#00884a;"></div>
<span class="t r" style="left:47.20px;top:856.00px;font-size:12px;line-height:12px;letter-spacing:0.538px;">Packaging</span>
<svg style="left:48px;top:870px" width="28" height="28" viewBox="0 0 28 28" fill="none" stroke="#000" stroke-width="1.15" stroke-linejoin="round"><path d="M13.07 6.17 L13.40 6.10 L13.74 5.90 L14.13 5.63 L14.54 5.39 L14.96 5.26 L15.35 5.29 L15.68 5.50 L15.94 5.85 L16.13 6.29 L16.29 6.72 L16.45 7.09 L16.67 7.34 L16.98 7.47 L17.38 7.51 L17.84 7.53 L18.32 7.58 L18.73 7.71 L19.03 7.97 L19.18 8.33 L19.18 8.77 L19.08 9.24 L18.95 9.68 L18.87 10.07 L18.90 10.41 L19.07 10.69 L19.37 10.96 L19.74 11.24 L20.09 11.56 L20.35 11.92 L20.44 12.30 L20.35 12.68 L20.09 13.04 L19.74 13.36 L19.37 13.64 L19.07 13.91 L18.90 14.19 L18.87 14.53 L18.95 14.92 L19.08 15.36 L19.18 15.83 L19.18 16.27 L19.03 16.63 L18.73 16.89 L18.32 17.02 L17.84 17.07 L17.38 17.09 L16.98 17.13 L16.67 17.26 L16.45 17.51 L16.29 17.88 L16.13 18.31 L15.94 18.75 L15.68 19.10 L15.35 19.31 L14.96 19.34 L14.54 19.21 L14.13 18.97 L13.74 18.70 L13.40 18.50 L13.07 18.43 L12.74 18.50 L12.40 18.70 L12.01 18.97 L11.60 19.21 L11.18 19.34 L10.79 19.31 L10.46 19.10 L10.20 18.75 L10.01 18.31 L9.85 17.88 L9.69 17.51 L9.47 17.26 L9.16 17.13 L8.76 17.09 L8.30 17.07 L7.82 17.02 L7.41 16.89 L7.11 16.63 L6.96 16.27 L6.96 15.83 L7.06 15.36 L7.19 14.92 L7.27 14.53 L7.24 14.19 L7.07 13.91 L6.77 13.64 L6.40 13.36 L6.05 13.04 L5.79 12.68 L5.70 12.30 L5.79 11.92 L6.05 11.56 L6.40 11.24 L6.77 10.96 L7.07 10.69 L7.24 10.41 L7.27 10.07 L7.19 9.68 L7.06 9.24 L6.96 8.77 L6.96 8.33 L7.11 7.97 L7.41 7.71 L7.82 7.58 L8.30 7.53 L8.76 7.51 L9.16 7.47 L9.47 7.34 L9.69 7.09 L9.85 6.72 L10.01 6.29 L10.20 5.85 L10.46 5.50 L10.79 5.29 L11.18 5.26 L11.60 5.39 L12.01 5.63 L12.40 5.90 L12.74 6.10Z" stroke-width="1.2"/><path d="M10.2 13.15 L11.7 14.5 L16.2 10.15" stroke-width="1.35" stroke-linejoin="miter"/><path d="M8.9 19.6 V25.2 L13.15 22.3 L17.75 25.2 V19.6" stroke-width="1.15" stroke-linejoin="miter"/></svg>
<span class="t " style="left:84.40px;top:876.00px;font-size:20px;line-height:20px;letter-spacing:0.571px;font-weight:700;">Create Box in Paco</span>
<div class="b" style="left:341px;top:865px;width:48px;height:24px;background:#007bc0;border-radius:12px;"></div>
<div class="b" style="left:371px;top:871px;width:12px;height:12px;background:#fff;border-radius:6px;"></div>
<span class="t " style="left:47.40px;top:923.00px;font-size:12px;line-height:12px;letter-spacing:0.344px;font-weight:700;">ERP System</span>
<span class="t " style="left:229.80px;top:923.00px;font-size:12px;line-height:12px;letter-spacing:0.525px;font-weight:700;">Last Modified</span>
<span class="t g" style="left:46.90px;top:942.00px;font-size:16px;line-height:16px;letter-spacing:0.860px;">PackagingControl</span>
<span class="t g" style="left:230.10px;top:942.00px;font-size:16px;line-height:16px;letter-spacing:1.180px;">12/10/2024 16:53</span>
<span class="t " style="left:48.10px;top:978.00px;font-size:12px;line-height:12px;letter-spacing:0.300px;font-weight:700;">Version</span>
<span class="t " style="left:229.80px;top:978.00px;font-size:12px;line-height:12px;letter-spacing:0.482px;font-weight:700;">Health Check</span>
<span class="t g" style="left:47.60px;top:997.00px;font-size:16px;line-height:16px;letter-spacing:1.250px;">0.1</span>
<svg style="left:232px;top:995px" width="20" height="20" viewBox="0 0 20 20"><circle cx="10.45" cy="9.5" r="6.15" fill="#008000"/></svg>
<span class="t g" style="left:254.90px;top:997.00px;font-size:16px;line-height:16px;letter-spacing:0.520px;">Active</span>
<div class="b" style="left:445px;top:834px;width:381px;height:198px;background:#eff1f2;"></div>
<div class="b" style="left:445px;top:834px;width:381px;height:6px;background:#00884a;"></div>
<span class="t r" style="left:460.20px;top:856.00px;font-size:12px;line-height:12px;letter-spacing:0.700px;">Maintenance</span>
<svg style="left:461px;top:870px" width="28" height="28" viewBox="0 0 28 28" fill="none" stroke="#000" stroke-width="1.15" stroke-linejoin="round"><path d="M13.07 6.17 L13.40 6.10 L13.74 5.90 L14.13 5.63 L14.54 5.39 L14.96 5.26 L15.35 5.29 L15.68 5.50 L15.94 5.85 L16.13 6.29 L16.29 6.72 L16.45 7.09 L16.67 7.34 L16.98 7.47 L17.38 7.51 L17.84 7.53 L18.32 7.58 L18.73 7.71 L19.03 7.97 L19.18 8.33 L19.18 8.77 L19.08 9.24 L18.95 9.68 L18.87 10.07 L18.90 10.41 L19.07 10.69 L19.37 10.96 L19.74 11.24 L20.09 11.56 L20.35 11.92 L20.44 12.30 L20.35 12.68 L20.09 13.04 L19.74 13.36 L19.37 13.64 L19.07 13.91 L18.90 14.19 L18.87 14.53 L18.95 14.92 L19.08 15.36 L19.18 15.83 L19.18 16.27 L19.03 16.63 L18.73 16.89 L18.32 17.02 L17.84 17.07 L17.38 17.09 L16.98 17.13 L16.67 17.26 L16.45 17.51 L16.29 17.88 L16.13 18.31 L15.94 18.75 L15.68 19.10 L15.35 19.31 L14.96 19.34 L14.54 19.21 L14.13 18.97 L13.74 18.70 L13.40 18.50 L13.07 18.43 L12.74 18.50 L12.40 18.70 L12.01 18.97 L11.60 19.21 L11.18 19.34 L10.79 19.31 L10.46 19.10 L10.20 18.75 L10.01 18.31 L9.85 17.88 L9.69 17.51 L9.47 17.26 L9.16 17.13 L8.76 17.09 L8.30 17.07 L7.82 17.02 L7.41 16.89 L7.11 16.63 L6.96 16.27 L6.96 15.83 L7.06 15.36 L7.19 14.92 L7.27 14.53 L7.24 14.19 L7.07 13.91 L6.77 13.64 L6.40 13.36 L6.05 13.04 L5.79 12.68 L5.70 12.30 L5.79 11.92 L6.05 11.56 L6.40 11.24 L6.77 10.96 L7.07 10.69 L7.24 10.41 L7.27 10.07 L7.19 9.68 L7.06 9.24 L6.96 8.77 L6.96 8.33 L7.11 7.97 L7.41 7.71 L7.82 7.58 L8.30 7.53 L8.76 7.51 L9.16 7.47 L9.47 7.34 L9.69 7.09 L9.85 6.72 L10.01 6.29 L10.20 5.85 L10.46 5.50 L10.79 5.29 L11.18 5.26 L11.60 5.39 L12.01 5.63 L12.40 5.90 L12.74 6.10Z" stroke-width="1.2"/><path d="M10.2 13.15 L11.7 14.5 L16.2 10.15" stroke-width="1.35" stroke-linejoin="miter"/><path d="M8.9 19.6 V25.2 L13.15 22.3 L17.75 25.2 V19.6" stroke-width="1.15" stroke-linejoin="miter"/></svg>
<span class="t " style="left:497.40px;top:876.00px;font-size:20px;line-height:20px;letter-spacing:0.733px;font-weight:700;">Create Notification</span>
<div class="b" style="left:754px;top:865px;width:48px;height:24px;background:#007bc0;border-radius:12px;"></div>
<div class="b" style="left:784px;top:871px;width:12px;height:12px;background:#fff;border-radius:6px;"></div>
<span class="t " style="left:460.40px;top:923.00px;font-size:12px;line-height:12px;letter-spacing:0.344px;font-weight:700;">ERP System</span>
<span class="t " style="left:642.80px;top:923.00px;font-size:12px;line-height:12px;letter-spacing:0.525px;font-weight:700;">Last Modified</span>
<span class="t g" style="left:460.50px;top:942.00px;font-size:16px;line-height:16px;letter-spacing:0.425px;">SAP-Bosch</span>
<span class="t g" style="left:643.10px;top:942.00px;font-size:16px;line-height:16px;letter-spacing:1.187px;">10/17/2024 15:12</span>
<span class="t " style="left:461.10px;top:978.00px;font-size:12px;line-height:12px;letter-spacing:0.300px;font-weight:700;">Version</span>
<span class="t " style="left:642.80px;top:978.00px;font-size:12px;line-height:12px;letter-spacing:0.482px;font-weight:700;">Health Check</span>
<span class="t g" style="left:460.60px;top:997.00px;font-size:16px;line-height:16px;letter-spacing:1.250px;">0.1</span>
<svg style="left:645px;top:995px" width="20" height="20" viewBox="0 0 20 20"><circle cx="10.45" cy="9.5" r="6.15" fill="#008000"/></svg>
<span class="t g" style="left:667.90px;top:997.00px;font-size:16px;line-height:16px;letter-spacing:0.520px;">Active</span>
<div class="b" style="left:858px;top:834px;width:381px;height:198px;background:#eff1f2;"></div>
<div class="b" style="left:858px;top:834px;width:381px;height:6px;background:#00884a;"></div>
<span class="t r" style="left:873.20px;top:856.00px;font-size:12px;line-height:12px;letter-spacing:0.700px;">Maintenance</span>
<svg style="left:874px;top:870px" width="28" height="28" viewBox="0 0 28 28" fill="none" stroke="#000" stroke-width="1.15" stroke-linejoin="round"><path d="M13.07 6.17 L13.40 6.10 L13.74 5.90 L14.13 5.63 L14.54 5.39 L14.96 5.26 L15.35 5.29 L15.68 5.50 L15.94 5.85 L16.13 6.29 L16.29 6.72 L16.45 7.09 L16.67 7.34 L16.98 7.47 L17.38 7.51 L17.84 7.53 L18.32 7.58 L18.73 7.71 L19.03 7.97 L19.18 8.33 L19.18 8.77 L19.08 9.24 L18.95 9.68 L18.87 10.07 L18.90 10.41 L19.07 10.69 L19.37 10.96 L19.74 11.24 L20.09 11.56 L20.35 11.92 L20.44 12.30 L20.35 12.68 L20.09 13.04 L19.74 13.36 L19.37 13.64 L19.07 13.91 L18.90 14.19 L18.87 14.53 L18.95 14.92 L19.08 15.36 L19.18 15.83 L19.18 16.27 L19.03 16.63 L18.73 16.89 L18.32 17.02 L17.84 17.07 L17.38 17.09 L16.98 17.13 L16.67 17.26 L16.45 17.51 L16.29 17.88 L16.13 18.31 L15.94 18.75 L15.68 19.10 L15.35 19.31 L14.96 19.34 L14.54 19.21 L14.13 18.97 L13.74 18.70 L13.40 18.50 L13.07 18.43 L12.74 18.50 L12.40 18.70 L12.01 18.97 L11.60 19.21 L11.18 19.34 L10.79 19.31 L10.46 19.10 L10.20 18.75 L10.01 18.31 L9.85 17.88 L9.69 17.51 L9.47 17.26 L9.16 17.13 L8.76 17.09 L8.30 17.07 L7.82 17.02 L7.41 16.89 L7.11 16.63 L6.96 16.27 L6.96 15.83 L7.06 15.36 L7.19 14.92 L7.27 14.53 L7.24 14.19 L7.07 13.91 L6.77 13.64 L6.40 13.36 L6.05 13.04 L5.79 12.68 L5.70 12.30 L5.79 11.92 L6.05 11.56 L6.40 11.24 L6.77 10.96 L7.07 10.69 L7.24 10.41 L7.27 10.07 L7.19 9.68 L7.06 9.24 L6.96 8.77 L6.96 8.33 L7.11 7.97 L7.41 7.71 L7.82 7.58 L8.30 7.53 L8.76 7.51 L9.16 7.47 L9.47 7.34 L9.69 7.09 L9.85 6.72 L10.01 6.29 L10.20 5.85 L10.46 5.50 L10.79 5.29 L11.18 5.26 L11.60 5.39 L12.01 5.63 L12.40 5.90 L12.74 6.10Z" stroke-width="1.2"/><path d="M10.2 13.15 L11.7 14.5 L16.2 10.15" stroke-width="1.35" stroke-linejoin="miter"/><path d="M8.9 19.6 V25.2 L13.15 22.3 L17.75 25.2 V19.6" stroke-width="1.15" stroke-linejoin="miter"/></svg>
<span class="t " style="left:910.40px;top:876.00px;font-size:20px;line-height:20px;letter-spacing:0.774px;font-weight:700;">Create Notification Item</span>
<div class="b" style="left:1167px;top:865px;width:48px;height:24px;background:#007bc0;border-radius:12px;"></div>
<div class="b" style="left:1197px;top:871px;width:12px;height:12px;background:#fff;border-radius:6px;"></div>
<span class="t " style="left:873.40px;top:923.00px;font-size:12px;line-height:12px;letter-spacing:0.344px;font-weight:700;">ERP System</span>
<span class="t " style="left:1055.80px;top:923.00px;font-size:12px;line-height:12px;letter-spacing:0.525px;font-weight:700;">Last Modified</span>
<span class="t g" style="left:873.50px;top:942.00px;font-size:16px;line-height:16px;letter-spacing:0.425px;">SAP-Bosch</span>
<span class="t g" style="left:1056.10px;top:942.00px;font-size:16px;line-height:16px;letter-spacing:1.187px;">10/17/2024 15:12</span>
<span class="t " style="left:874.10px;top:978.00px;font-size:12px;line-height:12px;letter-spacing:0.300px;font-weight:700;">Version</span>
<span class="t " style="left:1055.80px;top:978.00px;font-size:12px;line-height:12px;letter-spacing:0.482px;font-weight:700;">Health Check</span>
<span class="t g" style="left:873.60px;top:997.00px;font-size:16px;line-height:16px;letter-spacing:1.250px;">0.1</span>
<svg style="left:1058px;top:995px" width="20" height="20" viewBox="0 0 20 20"><circle cx="10.45" cy="9.5" r="6.15" fill="#008000"/></svg>
<span class="t g" style="left:1080.90px;top:997.00px;font-size:16px;line-height:16px;letter-spacing:0.520px;">Active</span>
<div class="b" style="left:1271px;top:834px;width:381px;height:198px;background:#eff1f2;"></div>
<div class="b" style="left:1271px;top:834px;width:381px;height:6px;background:#00884a;"></div>
<span class="t r" style="left:1286.20px;top:856.00px;font-size:12px;line-height:12px;letter-spacing:0.700px;">Maintenance</span>
<svg style="left:1287px;top:870px" width="28" height="28" viewBox="0 0 28 28" fill="none" stroke="#000" stroke-width="1.15" stroke-linejoin="round"><path d="M13.07 6.17 L13.40 6.10 L13.74 5.90 L14.13 5.63 L14.54 5.39 L14.96 5.26 L15.35 5.29 L15.68 5.50 L15.94 5.85 L16.13 6.29 L16.29 6.72 L16.45 7.09 L16.67 7.34 L16.98 7.47 L17.38 7.51 L17.84 7.53 L18.32 7.58 L18.73 7.71 L19.03 7.97 L19.18 8.33 L19.18 8.77 L19.08 9.24 L18.95 9.68 L18.87 10.07 L18.90 10.41 L19.07 10.69 L19.37 10.96 L19.74 11.24 L20.09 11.56 L20.35 11.92 L20.44 12.30 L20.35 12.68 L20.09 13.04 L19.74 13.36 L19.37 13.64 L19.07 13.91 L18.90 14.19 L18.87 14.53 L18.95 14.92 L19.08 15.36 L19.18 15.83 L19.18 16.27 L19.03 16.63 L18.73 16.89 L18.32 17.02 L17.84 17.07 L17.38 17.09 L16.98 17.13 L16.67 17.26 L16.45 17.51 L16.29 17.88 L16.13 18.31 L15.94 18.75 L15.68 19.10 L15.35 19.31 L14.96 19.34 L14.54 19.21 L14.13 18.97 L13.74 18.70 L13.40 18.50 L13.07 18.43 L12.74 18.50 L12.40 18.70 L12.01 18.97 L11.60 19.21 L11.18 19.34 L10.79 19.31 L10.46 19.10 L10.20 18.75 L10.01 18.31 L9.85 17.88 L9.69 17.51 L9.47 17.26 L9.16 17.13 L8.76 17.09 L8.30 17.07 L7.82 17.02 L7.41 16.89 L7.11 16.63 L6.96 16.27 L6.96 15.83 L7.06 15.36 L7.19 14.92 L7.27 14.53 L7.24 14.19 L7.07 13.91 L6.77 13.64 L6.40 13.36 L6.05 13.04 L5.79 12.68 L5.70 12.30 L5.79 11.92 L6.05 11.56 L6.40 11.24 L6.77 10.96 L7.07 10.69 L7.24 10.41 L7.27 10.07 L7.19 9.68 L7.06 9.24 L6.96 8.77 L6.96 8.33 L7.11 7.97 L7.41 7.71 L7.82 7.58 L8.30 7.53 L8.76 7.51 L9.16 7.47 L9.47 7.34 L9.69 7.09 L9.85 6.72 L10.01 6.29 L10.20 5.85 L10.46 5.50 L10.79 5.29 L11.18 5.26 L11.60 5.39 L12.01 5.63 L12.40 5.90 L12.74 6.10Z" stroke-width="1.2"/><path d="M10.2 13.15 L11.7 14.5 L16.2 10.15" stroke-width="1.35" stroke-linejoin="miter"/><path d="M8.9 19.6 V25.2 L13.15 22.3 L17.75 25.2 V19.6" stroke-width="1.15" stroke-linejoin="miter"/></svg>
<span class="t " style="left:1323.40px;top:876.00px;font-size:20px;line-height:20px;letter-spacing:0.756px;font-weight:700;">Create Notification Ite...</span>
<div class="b" style="left:1580px;top:865px;width:48px;height:24px;background:#007bc0;border-radius:12px;"></div>
<div class="b" style="left:1610px;top:871px;width:12px;height:12px;background:#fff;border-radius:6px;"></div>
<span class="t " style="left:1286.40px;top:923.00px;font-size:12px;line-height:12px;letter-spacing:0.344px;font-weight:700;">ERP System</span>
<span class="t " style="left:1468.80px;top:923.00px;font-size:12px;line-height:12px;letter-spacing:0.525px;font-weight:700;">Last Modified</span>
<span class="t g" style="left:1286.50px;top:942.00px;font-size:16px;line-height:16px;letter-spacing:0.425px;">SAP-Bosch</span>
<span class="t g" style="left:1469.10px;top:942.00px;font-size:16px;line-height:16px;letter-spacing:1.187px;">10/17/2024 15:12</span>
<span class="t " style="left:1287.10px;top:978.00px;font-size:12px;line-height:12px;letter-spacing:0.300px;font-weight:700;">Version</span>
<span class="t " style="left:1468.80px;top:978.00px;font-size:12px;line-height:12px;letter-spacing:0.482px;font-weight:700;">Health Check</span>
<span class="t g" style="left:1286.60px;top:997.00px;font-size:16px;line-height:16px;letter-spacing:1.250px;">0.1</span>
<svg style="left:1471px;top:995px" width="20" height="20" viewBox="0 0 20 20"><circle cx="10.45" cy="9.5" r="6.15" fill="#008000"/></svg>
<span class="t g" style="left:1493.90px;top:997.00px;font-size:16px;line-height:16px;letter-spacing:0.520px;">Active</span>
<div class="b" style="left:32px;top:1056px;width:381px;height:197px;background:#eff1f2;"></div>
<div class="b" style="left:32px;top:1056px;width:381px;height:6px;background:#00884a;"></div>
<span class="t r" style="left:47.20px;top:1078.00px;font-size:12px;line-height:12px;letter-spacing:0.700px;">Maintenance</span>
<svg style="left:48px;top:1092px" width="28" height="28" viewBox="0 0 28 28" fill="none" stroke="#000" stroke-width="1.15" stroke-linejoin="round"><path d="M13.07 6.17 L13.40 6.10 L13.74 5.90 L14.13 5.63 L14.54 5.39 L14.96 5.26 L15.35 5.29 L15.68 5.50 L15.94 5.85 L16.13 6.29 L16.29 6.72 L16.45 7.09 L16.67 7.34 L16.98 7.47 L17.38 7.51 L17.84 7.53 L18.32 7.58 L18.73 7.71 L19.03 7.97 L19.18 8.33 L19.18 8.77 L19.08 9.24 L18.95 9.68 L18.87 10.07 L18.90 10.41 L19.07 10.69 L19.37 10.96 L19.74 11.24 L20.09 11.56 L20.35 11.92 L20.44 12.30 L20.35 12.68 L20.09 13.04 L19.74 13.36 L19.37 13.64 L19.07 13.91 L18.90 14.19 L18.87 14.53 L18.95 14.92 L19.08 15.36 L19.18 15.83 L19.18 16.27 L19.03 16.63 L18.73 16.89 L18.32 17.02 L17.84 17.07 L17.38 17.09 L16.98 17.13 L16.67 17.26 L16.45 17.51 L16.29 17.88 L16.13 18.31 L15.94 18.75 L15.68 19.10 L15.35 19.31 L14.96 19.34 L14.54 19.21 L14.13 18.97 L13.74 18.70 L13.40 18.50 L13.07 18.43 L12.74 18.50 L12.40 18.70 L12.01 18.97 L11.60 19.21 L11.18 19.34 L10.79 19.31 L10.46 19.10 L10.20 18.75 L10.01 18.31 L9.85 17.88 L9.69 17.51 L9.47 17.26 L9.16 17.13 L8.76 17.09 L8.30 17.07 L7.82 17.02 L7.41 16.89 L7.11 16.63 L6.96 16.27 L6.96 15.83 L7.06 15.36 L7.19 14.92 L7.27 14.53 L7.24 14.19 L7.07 13.91 L6.77 13.64 L6.40 13.36 L6.05 13.04 L5.79 12.68 L5.70 12.30 L5.79 11.92 L6.05 11.56 L6.40 11.24 L6.77 10.96 L7.07 10.69 L7.24 10.41 L7.27 10.07 L7.19 9.68 L7.06 9.24 L6.96 8.77 L6.96 8.33 L7.11 7.97 L7.41 7.71 L7.82 7.58 L8.30 7.53 L8.76 7.51 L9.16 7.47 L9.47 7.34 L9.69 7.09 L9.85 6.72 L10.01 6.29 L10.20 5.85 L10.46 5.50 L10.79 5.29 L11.18 5.26 L11.60 5.39 L12.01 5.63 L12.40 5.90 L12.74 6.10Z" stroke-width="1.2"/><path d="M10.2 13.15 L11.7 14.5 L16.2 10.15" stroke-width="1.35" stroke-linejoin="miter"/><path d="M8.9 19.6 V25.2 L13.15 22.3 L17.75 25.2 V19.6" stroke-width="1.15" stroke-linejoin="miter"/></svg>
<span class="t " style="left:84.40px;top:1098.00px;font-size:20px;line-height:20px;letter-spacing:0.800px;font-weight:700;">Create Order</span>
<div class="b" style="left:341px;top:1086px;width:48px;height:24px;background:#007bc0;border-radius:12px;"></div>
<div class="b" style="left:371px;top:1092px;width:12px;height:12px;background:#fff;border-radius:6px;"></div>
<span class="t " style="left:47.40px;top:1144.00px;font-size:12px;line-height:12px;letter-spacing:0.344px;font-weight:700;">ERP System</span>
<span class="t " style="left:229.80px;top:1144.00px;font-size:12px;line-height:12px;letter-spacing:0.525px;font-weight:700;">Last Modified</span>
<span class="t g" style="left:47.50px;top:1163.00px;font-size:16px;line-height:16px;letter-spacing:0.425px;">SAP-Bosch</span>
<span class="t g" style="left:230.10px;top:1163.00px;font-size:16px;line-height:16px;letter-spacing:1.180px;">10/17/2024 15:13</span>
<span class="t " style="left:48.10px;top:1199.00px;font-size:12px;line-height:12px;letter-spacing:0.300px;font-weight:700;">Version</span>
<span class="t " style="left:229.80px;top:1199.00px;font-size:12px;line-height:12px;letter-spacing:0.482px;font-weight:700;">Health Check</span>
<span class="t g" style="left:47.60px;top:1218.00px;font-size:16px;line-height:16px;letter-spacing:1.250px;">0.1</span>
<svg style="left:232px;top:1216px" width="20" height="20" viewBox="0 0 20 20"><circle cx="10.45" cy="9.5" r="6.15" fill="#008000"/></svg>
<span class="t g" style="left:254.90px;top:1218.00px;font-size:16px;line-height:16px;letter-spacing:0.520px;">Active</span>
<div class="b" style="left:445px;top:1056px;width:381px;height:197px;background:#eff1f2;"></div>
<div class="b" style="left:445px;top:1056px;width:381px;height:6px;background:#00884a;"></div>
<span class="t r" style="left:460.20px;top:1078.00px;font-size:12px;line-height:12px;letter-spacing:0.700px;">Maintenance</span>
<svg style="left:461px;top:1092px" width="28" height="28" viewBox="0 0 28 28" fill="none" stroke="#000" stroke-width="1.15" stroke-linejoin="round"><path d="M13.07 6.17 L13.40 6.10 L13.74 5.90 L14.13 5.63 L14.54 5.39 L14.96 5.26 L15.35 5.29 L15.68 5.50 L15.94 5.85 L16.13 6.29 L16.29 6.72 L16.45 7.09 L16.67 7.34 L16.98 7.47 L17.38 7.51 L17.84 7.53 L18.32 7.58 L18.73 7.71 L19.03 7.97 L19.18 8.33 L19.18 8.77 L19.08 9.24 L18.95 9.68 L18.87 10.07 L18.90 10.41 L19.07 10.69 L19.37 10.96 L19.74 11.24 L20.09 11.56 L20.35 11.92 L20.44 12.30 L20.35 12.68 L20.09 13.04 L19.74 13.36 L19.37 13.64 L19.07 13.91 L18.90 14.19 L18.87 14.53 L18.95 14.92 L19.08 15.36 L19.18 15.83 L19.18 16.27 L19.03 16.63 L18.73 16.89 L18.32 17.02 L17.84 17.07 L17.38 17.09 L16.98 17.13 L16.67 17.26 L16.45 17.51 L16.29 17.88 L16.13 18.31 L15.94 18.75 L15.68 19.10 L15.35 19.31 L14.96 19.34 L14.54 19.21 L14.13 18.97 L13.74 18.70 L13.40 18.50 L13.07 18.43 L12.74 18.50 L12.40 18.70 L12.01 18.97 L11.60 19.21 L11.18 19.34 L10.79 19.31 L10.46 19.10 L10.20 18.75 L10.01 18.31 L9.85 17.88 L9.69 17.51 L9.47 17.26 L9.16 17.13 L8.76 17.09 L8.30 17.07 L7.82 17.02 L7.41 16.89 L7.11 16.63 L6.96 16.27 L6.96 15.83 L7.06 15.36 L7.19 14.92 L7.27 14.53 L7.24 14.19 L7.07 13.91 L6.77 13.64 L6.40 13.36 L6.05 13.04 L5.79 12.68 L5.70 12.30 L5.79 11.92 L6.05 11.56 L6.40 11.24 L6.77 10.96 L7.07 10.69 L7.24 10.41 L7.27 10.07 L7.19 9.68 L7.06 9.24 L6.96 8.77 L6.96 8.33 L7.11 7.97 L7.41 7.71 L7.82 7.58 L8.30 7.53 L8.76 7.51 L9.16 7.47 L9.47 7.34 L9.69 7.09 L9.85 6.72 L10.01 6.29 L10.20 5.85 L10.46 5.50 L10.79 5.29 L11.18 5.26 L11.60 5.39 L12.01 5.63 L12.40 5.90 L12.74 6.10Z" stroke-width="1.2"/><path d="M10.2 13.15 L11.7 14.5 L16.2 10.15" stroke-width="1.35" stroke-linejoin="miter"/><path d="M8.9 19.6 V25.2 L13.15 22.3 L17.75 25.2 V19.6" stroke-width="1.15" stroke-linejoin="miter"/></svg>
<span class="t " style="left:497.40px;top:1098.00px;font-size:20px;line-height:20px;letter-spacing:0.742px;font-weight:700;">Create Order Confirmat...</span>
<div class="b" style="left:754px;top:1086px;width:48px;height:24px;background:#007bc0;border-radius:12px;"></div>
<div class="b" style="left:784px;top:1092px;width:12px;height:12px;background:#fff;border-radius:6px;"></div>
<span class="t " style="left:460.40px;top:1144.00px;font-size:12px;line-height:12px;letter-spacing:0.344px;font-weight:700;">ERP System</span>
<span class="t " style="left:642.80px;top:1144.00px;font-size:12px;line-height:12px;letter-spacing:0.525px;font-weight:700;">Last Modified</span>
<span class="t g" style="left:460.50px;top:1163.00px;font-size:16px;line-height:16px;letter-spacing:0.425px;">SAP-Bosch</span>
<span class="t g" style="left:643.10px;top:1163.00px;font-size:16px;line-height:16px;letter-spacing:1.180px;">10/17/2024 15:13</span>
<span class="t " style="left:461.10px;top:1199.00px;font-size:12px;line-height:12px;letter-spacing:0.300px;font-weight:700;">Version</span>
<span class="t " style="left:642.80px;top:1199.00px;font-size:12px;line-height:12px;letter-spacing:0.482px;font-weight:700;">Health Check</span>
<span class="t g" style="left:460.60px;top:1218.00px;font-size:16px;line-height:16px;letter-spacing:1.250px;">0.1</span>
<svg style="left:645px;top:1216px" width="20" height="20" viewBox="0 0 20 20"><circle cx="10.45" cy="9.5" r="6.15" fill="#008000"/></svg>
<span class="t g" style="left:667.90px;top:1218.00px;font-size:16px;line-height:16px;letter-spacing:0.520px;">Active</span>
<div class="b" style="left:858px;top:1056px;width:381px;height:197px;background:#eff1f2;"></div>
<div class="b" style="left:858px;top:1056px;width:381px;height:6px;background:#00884a;"></div>
<span class="t r" style="left:873.20px;top:1078.00px;font-size:12px;line-height:12px;letter-spacing:0.700px;">Maintenance</span>
<svg style="left:874px;top:1092px" width="28" height="28" viewBox="0 0 28 28" fill="none" stroke="#000" stroke-width="1.15" stroke-linejoin="round"><path d="M13.07 6.17 L13.40 6.10 L13.74 5.90 L14.13 5.63 L14.54 5.39 L14.96 5.26 L15.35 5.29 L15.68 5.50 L15.94 5.85 L16.13 6.29 L16.29 6.72 L16.45 7.09 L16.67 7.34 L16.98 7.47 L17.38 7.51 L17.84 7.53 L18.32 7.58 L18.73 7.71 L19.03 7.97 L19.18 8.33 L19.18 8.77 L19.08 9.24 L18.95 9.68 L18.87 10.07 L18.90 10.41 L19.07 10.69 L19.37 10.96 L19.74 11.24 L20.09 11.56 L20.35 11.92 L20.44 12.30 L20.35 12.68 L20.09 13.04 L19.74 13.36 L19.37 13.64 L19.07 13.91 L18.90 14.19 L18.87 14.53 L18.95 14.92 L19.08 15.36 L19.18 15.83 L19.18 16.27 L19.03 16.63 L18.73 16.89 L18.32 17.02 L17.84 17.07 L17.38 17.09 L16.98 17.13 L16.67 17.26 L16.45 17.51 L16.29 17.88 L16.13 18.31 L15.94 18.75 L15.68 19.10 L15.35 19.31 L14.96 19.34 L14.54 19.21 L14.13 18.97 L13.74 18.70 L13.40 18.50 L13.07 18.43 L12.74 18.50 L12.40 18.70 L12.01 18.97 L11.60 19.21 L11.18 19.34 L10.79 19.31 L10.46 19.10 L10.20 18.75 L10.01 18.31 L9.85 17.88 L9.69 17.51 L9.47 17.26 L9.16 17.13 L8.76 17.09 L8.30 17.07 L7.82 17.02 L7.41 16.89 L7.11 16.63 L6.96 16.27 L6.96 15.83 L7.06 15.36 L7.19 14.92 L7.27 14.53 L7.24 14.19 L7.07 13.91 L6.77 13.64 L6.40 13.36 L6.05 13.04 L5.79 12.68 L5.70 12.30 L5.79 11.92 L6.05 11.56 L6.40 11.24 L6.77 10.96 L7.07 10.69 L7.24 10.41 L7.27 10.07 L7.19 9.68 L7.06 9.24 L6.96 8.77 L6.96 8.33 L7.11 7.97 L7.41 7.71 L7.82 7.58 L8.30 7.53 L8.76 7.51 L9.16 7.47 L9.47 7.34 L9.69 7.09 L9.85 6.72 L10.01 6.29 L10.20 5.85 L10.46 5.50 L10.79 5.29 L11.18 5.26 L11.60 5.39 L12.01 5.63 L12.40 5.90 L12.74 6.10Z" stroke-width="1.2"/><path d="M10.2 13.15 L11.7 14.5 L16.2 10.15" stroke-width="1.35" stroke-linejoin="miter"/><path d="M8.9 19.6 V25.2 L13.15 22.3 L17.75 25.2 V19.6" stroke-width="1.15" stroke-linejoin="miter"/></svg>
<span class="t " style="left:910.40px;top:1098.00px;font-size:20px;line-height:20px;letter-spacing:0.767px;font-weight:700;">Create Order Operation</span>
<div class="b" style="left:1167px;top:1086px;width:48px;height:24px;background:#007bc0;border-radius:12px;"></div>
<div class="b" style="left:1197px;top:1092px;width:12px;height:12px;background:#fff;border-radius:6px;"></div>
<span class="t " style="left:873.40px;top:1144.00px;font-size:12px;line-height:12px;letter-spacing:0.344px;font-weight:700;">ERP System</span>
<span class="t " style="left:1055.80px;top:1144.00px;font-size:12px;line-height:12px;letter-spacing:0.525px;font-weight:700;">Last Modified</span>
<span class="t g" style="left:873.50px;top:1163.00px;font-size:16px;line-height:16px;letter-spacing:0.425px;">SAP-Bosch</span>
<span class="t g" style="left:1056.10px;top:1163.00px;font-size:16px;line-height:16px;letter-spacing:1.180px;">10/17/2024 15:13</span>
<span class="t " style="left:874.10px;top:1199.00px;font-size:12px;line-height:12px;letter-spacing:0.300px;font-weight:700;">Version</span>
<span class="t " style="left:1055.80px;top:1199.00px;font-size:12px;line-height:12px;letter-spacing:0.482px;font-weight:700;">Health Check</span>
<span class="t g" style="left:873.60px;top:1218.00px;font-size:16px;line-height:16px;letter-spacing:1.250px;">0.1</span>
<svg style="left:1058px;top:1216px" width="20" height="20" viewBox="0 0 20 20"><circle cx="10.45" cy="9.5" r="6.15" fill="#008000"/></svg>
<span class="t g" style="left:1080.90px;top:1218.00px;font-size:16px;line-height:16px;letter-spacing:0.520px;">Active</span>
<div class="b" style="left:1271px;top:1056px;width:381px;height:197px;background:#eff1f2;"></div>
<div class="b" style="left:1271px;top:1056px;width:381px;height:6px;background:#00884a;"></div>
<span class="t r" style="left:1286.20px;top:1078.00px;font-size:12px;line-height:12px;letter-spacing:0.700px;">Maintenance</span>
<svg style="left:1287px;top:1092px" width="28" height="28" viewBox="0 0 28 28" fill="none" stroke="#000" stroke-width="1.15" stroke-linejoin="round"><path d="M13.07 6.17 L13.40 6.10 L13.74 5.90 L14.13 5.63 L14.54 5.39 L14.96 5.26 L15.35 5.29 L15.68 5.50 L15.94 5.85 L16.13 6.29 L16.29 6.72 L16.45 7.09 L16.67 7.34 L16.98 7.47 L17.38 7.51 L17.84 7.53 L18.32 7.58 L18.73 7.71 L19.03 7.97 L19.18 8.33 L19.18 8.77 L19.08 9.24 L18.95 9.68 L18.87 10.07 L18.90 10.41 L19.07 10.69 L19.37 10.96 L19.74 11.24 L20.09 11.56 L20.35 11.92 L20.44 12.30 L20.35 12.68 L20.09 13.04 L19.74 13.36 L19.37 13.64 L19.07 13.91 L18.90 14.19 L18.87 14.53 L18.95 14.92 L19.08 15.36 L19.18 15.83 L19.18 16.27 L19.03 16.63 L18.73 16.89 L18.32 17.02 L17.84 17.07 L17.38 17.09 L16.98 17.13 L16.67 17.26 L16.45 17.51 L16.29 17.88 L16.13 18.31 L15.94 18.75 L15.68 19.10 L15.35 19.31 L14.96 19.34 L14.54 19.21 L14.13 18.97 L13.74 18.70 L13.40 18.50 L13.07 18.43 L12.74 18.50 L12.40 18.70 L12.01 18.97 L11.60 19.21 L11.18 19.34 L10.79 19.31 L10.46 19.10 L10.20 18.75 L10.01 18.31 L9.85 17.88 L9.69 17.51 L9.47 17.26 L9.16 17.13 L8.76 17.09 L8.30 17.07 L7.82 17.02 L7.41 16.89 L7.11 16.63 L6.96 16.27 L6.96 15.83 L7.06 15.36 L7.19 14.92 L7.27 14.53 L7.24 14.19 L7.07 13.91 L6.77 13.64 L6.40 13.36 L6.05 13.04 L5.79 12.68 L5.70 12.30 L5.79 11.92 L6.05 11.56 L6.40 11.24 L6.77 10.96 L7.07 10.69 L7.24 10.41 L7.27 10.07 L7.19 9.68 L7.06 9.24 L6.96 8.77 L6.96 8.33 L7.11 7.97 L7.41 7.71 L7.82 7.58 L8.30 7.53 L8.76 7.51 L9.16 7.47 L9.47 7.34 L9.69 7.09 L9.85 6.72 L10.01 6.29 L10.20 5.85 L10.46 5.50 L10.79 5.29 L11.18 5.26 L11.60 5.39 L12.01 5.63 L12.40 5.90 L12.74 6.10Z" stroke-width="1.2"/><path d="M10.2 13.15 L11.7 14.5 L16.2 10.15" stroke-width="1.35" stroke-linejoin="miter"/><path d="M8.9 19.6 V25.2 L13.15 22.3 L17.75 25.2 V19.6" stroke-width="1.15" stroke-linejoin="miter"/></svg>
<span class="t " style="left:1323.40px;top:1098.00px;font-size:20px;line-height:20px;letter-spacing:0.750px;font-weight:700;">Create Order Operation...</span>
<div class="b" style="left:1580px;top:1086px;width:48px;height:24px;background:#007bc0;border-radius:12px;"></div>
<div class="b" style="left:1610px;top:1092px;width:12px;height:12px;background:#fff;border-radius:6px;"></div>
<span class="t " style="left:1286.40px;top:1144.00px;font-size:12px;line-height:12px;letter-spacing:0.344px;font-weight:700;">ERP System</span>
<span class="t " style="left:1468.80px;top:1144.00px;font-size:12px;line-height:12px;letter-spacing:0.525px;font-weight:700;">Last Modified</span>
<span class="t g" style="left:1286.50px;top:1163.00px;font-size:16px;line-height:16px;letter-spacing:0.425px;">SAP-Bosch</span>
<span class="t g" style="left:1469.10px;top:1163.00px;font-size:16px;line-height:16px;letter-spacing:1.167px;">10/17/2024 15:14</span>
<span class="t " style="left:1287.10px;top:1199.00px;font-size:12px;line-height:12px;letter-spacing:0.300px;font-weight:700;">Version</span>
<span class="t " style="left:1468.80px;top:1199.00px;font-size:12px;line-height:12px;letter-spacing:0.482px;font-weight:700;">Health Check</span>
<span class="t g" style="left:1286.60px;top:1218.00px;font-size:16px;line-height:16px;letter-spacing:1.250px;">0.1</span>
<svg style="left:1471px;top:1216px" width="20" height="20" viewBox="0 0 20 20"><circle cx="10.45" cy="9.5" r="6.15" fill="#008000"/></svg>
<span class="t g" style="left:1493.90px;top:1218.00px;font-size:16px;line-height:16px;letter-spacing:0.520px;">Active</span>
<div class="b" style="left:1685px;top:61px;width:2px;height:966px;background:#808080;"></div>
<div class="b" style="left:1690px;top:49px;width:1px;height:1135px;background:#8a9097;"></div>
<span class="t g h" style="left:1722.40px;top:57.00px;font-size:16px;line-height:16px;letter-spacing:0.530px;font-weight:700;">Description</span>
<svg style="left:2200px;top:60px" width="32" height="32" viewBox="0 0 32 32" fill="none" stroke="#1a1a1a" stroke-width="1.15"><path d="M8.4 8.1 L23.5 22.7 M23.5 8.1 L8.4 22.7"/></svg>
<span class="t g" style="left:1723.10px;top:97.00px;font-size:16px;line-height:16px;letter-spacing:0.695px;">This Connector Package fetches a batch number from Bosch</span>
<span class="t g" style="left:1723.00px;top:121.00px;font-size:16px;line-height:16px;letter-spacing:0.670px;">specific SAP S/4 HANA systems. The batch number can be</span>
<span class="t g" style="left:1722.50px;top:145.00px;font-size:16px;line-height:16px;letter-spacing:0.847px;">used e.g in the Yield Confirmation of 10 Digit Material.</span>
<span class="t g" style="left:1722.20px;top:169.00px;font-size:16px;line-height:16px;letter-spacing:0.777px;">Depending on the batch assignment logic defined in SAP</span>
<span class="t g" style="left:1722.50px;top:193.00px;font-size:16px;line-height:16px;letter-spacing:0.912px;">(new batch per confirmation, per day, per month, etc), the</span>
<span class="t g" style="left:1722.50px;top:217.00px;font-size:16px;line-height:16px;letter-spacing:0.850px;">batch number received could be a new number or a number</span>
<span class="t g" style="left:1723.50px;top:241.00px;font-size:16px;line-height:16px;letter-spacing:0.822px;">which has been used earlier.</span>
<div class="b" style="left:1723px;top:291px;width:485px;height:1px;background:#8a9097;"></div>
<span class="t g h" style="left:1723.30px;top:330.00px;font-size:16px;line-height:16px;letter-spacing:0.485px;font-weight:700;">Technical Information</span>
<span class="t r" style="left:1739.30px;top:369.00px;font-size:12px;line-height:12px;letter-spacing:0.789px;height:11px;overflow:hidden;">Operation:</span>
<span class="t g" style="left:1738.90px;top:388.00px;font-size:16px;line-height:16px;letter-spacing:0.790px;">batch-management/batch-creation</span>
<div class="b" style="left:1723px;top:411px;width:485px;height:1px;background:#000;"></div>
<span class="t r" style="left:1738.90px;top:433.00px;font-size:12px;line-height:12px;letter-spacing:0.675px;height:11px;overflow:hidden;">Provider:</span>
<span class="t g" style="left:1738.60px;top:452.00px;font-size:16px;line-height:16px;letter-spacing:1.250px;">BCI</span>
<div class="b" style="left:1723px;top:475px;width:485px;height:1px;background:#000;"></div>
<span class="t r" style="left:1738.90px;top:497.00px;font-size:12px;line-height:12px;letter-spacing:0.518px;height:11px;overflow:hidden;">Package Identifier</span>
<span class="t g" style="left:1739.10px;top:516.00px;font-size:16px;line-height:16px;letter-spacing:0.526px;">25B478BA83755AFC3676EA499B182F23C4C603ECD7E</span>
<span class="t g" style="left:2177.10px;top:516.00px;font-size:16px;line-height:16px;letter-spacing:0.800px;">...</span>
<div class="b" style="left:1723px;top:539px;width:485px;height:1px;background:#000;"></div>
<span class="t r" style="left:1738.90px;top:561.00px;font-size:12px;line-height:12px;letter-spacing:0.750px;height:11px;overflow:hidden;">Northbound Communication Pattern:</span>
<span class="t g" style="left:1739.40px;top:580.00px;font-size:16px;line-height:16px;letter-spacing:0.726px;">synchronous response</span>
<div class="b" style="left:1723px;top:603px;width:485px;height:1px;background:#000;"></div>
<span class="t r" style="left:1738.90px;top:625.00px;font-size:12px;line-height:12px;letter-spacing:0.419px;height:11px;overflow:hidden;">Response Available Event Routing Key:</span>
<span class="t g" style="left:1738.40px;top:644.00px;font-size:16px;line-height:16px;letter-spacing:0.660px;">...ckage.response.batch-management.batch-creation</span>
<div class="b" style="left:1723px;top:667px;width:485px;height:1px;background:#000;"></div>
<svg style="left:2168px;top:628px" width="32" height="32" viewBox="0 0 32 32" fill="none" stroke="#000" stroke-width="1.2"><path d="M11.75 13.9 H8.65 V23.5 H18.4 V20.3"/><path d="M13.5 9.5 H23.5 V18.65 H13.5 Z" stroke-dasharray="1.25 1.95" stroke-dashoffset="0.6"/></svg>
<span class="t r" style="left:1739.90px;top:689.00px;font-size:12px;line-height:12px;letter-spacing:0.450px;height:11px;overflow:hidden;">Asynchronous REST Endpoint:</span>
<span class="t g" style="left:1738.40px;top:708.00px;font-size:16px;line-height:16px;letter-spacing:1.100px;">...</span>
<span class="t g" style="left:1761.40px;top:708.00px;font-size:16px;line-height:16px;letter-spacing:0.528px;">82F23C4C603ECD7EA1D68D495DD1A79E87B5E</span>
<div class="b" style="left:1723px;top:731px;width:485px;height:1px;background:#000;"></div>
<svg style="left:2168px;top:692px" width="32" height="32" viewBox="0 0 32 32" fill="none" stroke="#000" stroke-width="1.2"><path d="M11.75 13.9 H8.65 V23.5 H18.4 V20.3"/><path d="M13.5 9.5 H23.5 V18.65 H13.5 Z" stroke-dasharray="1.25 1.95" stroke-dashoffset="0.6"/></svg>
<div class="b" style="left:1723px;top:780px;width:485px;height:1px;background:#8a9097;"></div>
<span class="t g h" style="left:1722.40px;top:819.00px;font-size:16px;line-height:16px;letter-spacing:0.436px;font-weight:700;">Response Delivery Paths</span>
<span class="t g" style="left:1723.40px;top:859.00px;font-size:16px;line-height:16px;letter-spacing:0.656px;">After a Package execution, ERP Connectivity needs to provide</span>
<span class="t g" style="left:1722.80px;top:883.00px;font-size:16px;line-height:16px;letter-spacing:0.790px;">a response to the calling client. In case the execution was</span>
<span class="t g" style="left:1723.30px;top:907.00px;font-size:16px;line-height:16px;letter-spacing:0.768px;">triggered as an asynchronous execution, there are multiple</span>
<span class="t g" style="left:1723.50px;top:931.00px;font-size:16px;line-height:16px;letter-spacing:0.783px;">ways on how the response can be delivered back to the</span>
<span class="t g" style="left:1722.80px;top:955.00px;font-size:16px;line-height:16px;letter-spacing:0.769px;">client. The following ways are configured for this Package:</span>
<span class="t g h" style="left:1730.60px;top:998.00px;font-size:16px;line-height:16px;letter-spacing:0.476px;font-weight:700;">Response Available IAS Notification</span>
<span class="t g" style="left:1730.40px;top:1019.00px;font-size:16px;line-height:16px;letter-spacing:0.792px;">Response available notification will be sent to Nexeed</span>
<span class="t g" style="left:1730.60px;top:1040.00px;font-size:16px;line-height:16px;letter-spacing:0.746px;">integration exchange. Other systems can subscribe to this</span>
<span class="t g" style="left:1731.00px;top:1061.00px;font-size:16px;line-height:16px;letter-spacing:0.812px;">exchange in order to get notified.</span>
<div class="b" style="left:1723px;top:1110px;width:118px;height:46px;background:#fff;border:1px solid #007bc0;"></div>
<span class="t g" style="left:1739.20px;top:1128.00px;font-size:16px;line-height:16px;letter-spacing:0.810px;color:#007bc0;">Set Default</span>
<div class="b" style="left:1859px;top:1110px;width:80px;height:46px;background:#fff;border:1px solid #a4abb3;"></div>
<span class="t g" style="left:1874.40px;top:1128.00px;font-size:16px;line-height:16px;letter-spacing:0.920px;color:#a4abb3;">Delete</span>
<div class="b" style="left:2132px;top:1110px;width:76px;height:48px;background:#007bc0;"></div>
<span class="t g" style="left:2147.80px;top:1128.00px;font-size:16px;line-height:16px;letter-spacing:0.900px;color:#fff;">Close</span>
</div>
</div></body></html>
